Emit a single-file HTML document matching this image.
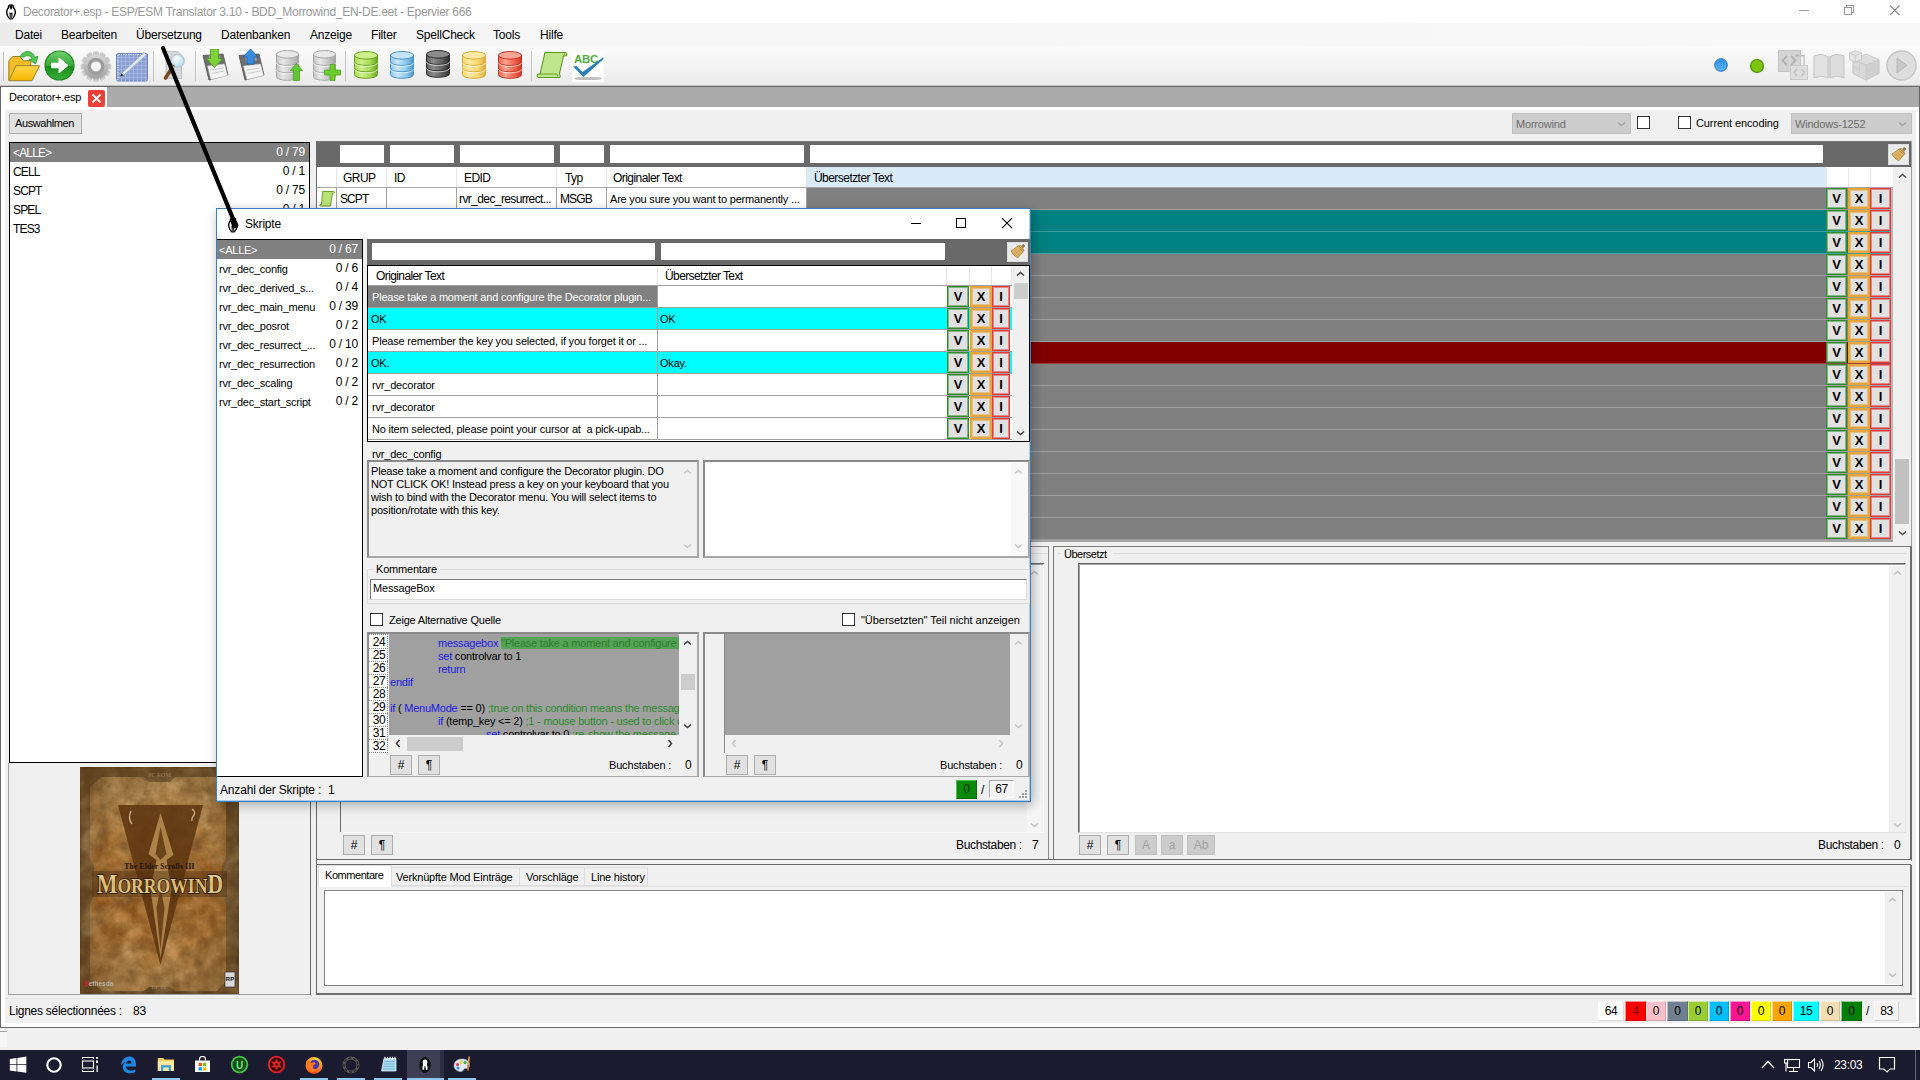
<!DOCTYPE html>
<html lang="de"><head><meta charset="utf-8"><title>Decorator+.esp - ESP/ESM Translator 3.10</title>
<style>
*{box-sizing:border-box;margin:0;padding:0}
html,body{width:1920px;height:1080px;overflow:hidden;background:#f0f0f0}
body{position:relative;font-family:"Liberation Sans",sans-serif;font-size:11px;color:#000}
div,span,svg{position:absolute}
.t{white-space:nowrap;line-height:14px;height:14px;font-size:11px}
.s{white-space:nowrap;line-height:16px;height:16px;font-size:12px}
.r{text-align:right}
.vb{width:21px;height:21px;background:#e1e1e1;border:1px solid;text-align:center;line-height:19px;font-size:13px}
.vb b{position:static;font-weight:700}
.c{position:static}

</style></head>
<body>
<!-- chrome -->
<div style="left:0px;top:0px;width:1920px;height:23px;background:#fff"></div>
<svg style="left:5.500px;top:3.700px" width="10" height="16" viewBox="0 0 10 15.500"><path d="M5 .7C3 .7 2.300 2 2.400 3.600 1.100 5 .5 6.800.7 8.800c.2 2 1.500 4 3 5.800h2.600c1.500-1.800 2.800-3.800 3-5.800.2-2-.4-3.800-1.700-5.200C7.700 2 7 .7 5 .7z" fill="#fff" stroke="#000" stroke-width="1.400"/><path d="M5 1.500c-1 0-1.600.8-1.500 1.800l.8.900-.5 1.300.7-.4L5 4.300l.5.800.7.400-.5-1.300.8-.9C6.600 2.300 6 1.500 5 1.500zM3.300 8.500l.7 5.500h.7V9.500h.600V14h.7l.7-5.500z" fill="#000"/></svg>
<div class="s" style="left:23px;top:4px;color:#999;letter-spacing:-0.28px">Decorator+.esp - ESP/ESM Translator 3.10 - BDD_Morrowind_EN-DE.eet - Epervier 666</div>
<svg style="left:1790px;top:0" width="130" height="22" viewBox="0 0 130 22"><g stroke="#999" stroke-width="1" fill="none" shape-rendering="crispEdges"><path d="M9 10.500h10"/><path d="M54.500 7.500h7v7h-7z"/><path d="M56.500 7.500v-2h7v7h-2"/></g><path d="M100 5.500l9.500 9.500M109.500 5.500l-9.500 9.500" stroke="#888" stroke-width="1.100" fill="none"/></svg>
<div style="left:0px;top:23px;width:1920px;height:23px;background:linear-gradient(90deg,#ececec 0,#f1f1f1 8%,#f5f5f5 22%,#f9f9f9 100%)"></div>
<div class="s" style="left:15px;top:27px;letter-spacing:-0.2px">Datei</div>
<div class="s" style="left:61px;top:27px;letter-spacing:-0.2px">Bearbeiten</div>
<div class="s" style="left:136px;top:27px;letter-spacing:-0.2px">Übersetzung</div>
<div class="s" style="left:221px;top:27px;letter-spacing:-0.2px">Datenbanken</div>
<div class="s" style="left:310px;top:27px;letter-spacing:-0.2px">Anzeige</div>
<div class="s" style="left:371px;top:27px;letter-spacing:-0.2px">Filter</div>
<div class="s" style="left:416px;top:27px;letter-spacing:-0.2px">SpellCheck</div>
<div class="s" style="left:493px;top:27px;letter-spacing:-0.2px">Tools</div>
<div class="s" style="left:540px;top:27px;letter-spacing:-0.2px">Hilfe</div>
<!-- toolbar -->
<div style="left:0px;top:46px;width:1920px;height:40px;background:linear-gradient(#fbfbfb,#f2f2f2 60%,#e9e9e9)"></div>
<div style="left:0px;top:85px;width:1920px;height:1px;background:#c4c4c4"></div>
<div style="left:0px;top:86px;width:1920px;height:1px;background:#6a6a6a"></div>
<div style="left:3px;top:52px;width:1px;height:29px;background:#bdbdbd"></div>
<div style="left:153px;top:51px;width:1px;height:30px;background:#c4c4c4"></div>
<div style="left:195px;top:51px;width:1px;height:30px;background:#c4c4c4"></div>
<div style="left:345px;top:51px;width:1px;height:30px;background:#c4c4c4"></div>
<div style="left:531px;top:51px;width:1px;height:30px;background:#c4c4c4"></div>
<svg style="left:8px;top:49px" width="34" height="34" viewBox="0 0 34 34"><defs><linearGradient id="fo" x1="0" y1="0" x2="0" y2="1"><stop offset="0" stop-color="#ffd84a"/><stop offset="1" stop-color="#f5b400"/></linearGradient></defs><path d="M.8 31.500V11.700L5 7.500h7l3.300 4.200h7.500v6" fill="#f3bd2a" stroke="#9a8228" stroke-width="1"/><path d="M.8 31.700L8 16.700h23.600L24 31.700z" fill="url(#fo)" stroke="#9a8228" stroke-width="1"/><path d="M12 8c2-5 8-7.500 12.500-3.500 1.500 1.400 2 2.500 2.300 3.800l3.200-1-2.200 7.500-6.800-4 3-1c-.6-2.600-4.500-4.500-8-1.800z" fill="#56c456" stroke="#2f9a2f" stroke-width=".8"/></svg>
<svg style="left:44px;top:50px" width="31" height="31" viewBox="0 0 31 31"><defs><linearGradient id="ga" x1="0" y1="0" x2="0" y2="1"><stop offset="0" stop-color="#6fcf6f"/><stop offset=".5" stop-color="#3aa83a"/><stop offset=".52" stop-color="#118a11"/><stop offset="1" stop-color="#3fb03f"/></linearGradient></defs><circle cx="15.500" cy="15.500" r="14.500" fill="url(#ga)" stroke="#1d8a1d" stroke-width="1.200"/><path d="M7.500 13.200h7.500V8l9 7.500-9 7.500v-5.200H7.500z" fill="#fff" stroke="#fff" stroke-width="1" stroke-linejoin="round"/></svg>
<svg style="left:80px;top:50px" width="32" height="32" viewBox="0 0 32 32"><defs><linearGradient id="gr" x1="0" y1="0" x2="0" y2="1"><stop offset="0" stop-color="#d8d8d8"/><stop offset="1" stop-color="#a2a2a2"/></linearGradient></defs><g transform="translate(16 16.500)"><g fill="url(#gr)"><rect x="-3" y="-15.500" width="6" height="7" rx="1.600" transform="rotate(0)"/><rect x="-3" y="-15.500" width="6" height="7" rx="1.600" transform="rotate(30)"/><rect x="-3" y="-15.500" width="6" height="7" rx="1.600" transform="rotate(60)"/><rect x="-3" y="-15.500" width="6" height="7" rx="1.600" transform="rotate(90)"/><rect x="-3" y="-15.500" width="6" height="7" rx="1.600" transform="rotate(120)"/><rect x="-3" y="-15.500" width="6" height="7" rx="1.600" transform="rotate(150)"/><rect x="-3" y="-15.500" width="6" height="7" rx="1.600" transform="rotate(180)"/><rect x="-3" y="-15.500" width="6" height="7" rx="1.600" transform="rotate(210)"/><rect x="-3" y="-15.500" width="6" height="7" rx="1.600" transform="rotate(240)"/><rect x="-3" y="-15.500" width="6" height="7" rx="1.600" transform="rotate(270)"/><rect x="-3" y="-15.500" width="6" height="7" rx="1.600" transform="rotate(300)"/><rect x="-3" y="-15.500" width="6" height="7" rx="1.600" transform="rotate(330)"/></g><circle r="12.200" fill="url(#gr)"/><circle r="7" fill="none" stroke="#9c9c9c" stroke-width="3"/><circle r="4.800" fill="#f6f6f6"/></g></svg>
<svg style="left:116px;top:52px" width="33" height="30" viewBox="0 0 33 30"><rect x=".5" y="1.500" width="31" height="27.500" rx="1.500" fill="#8a9fd2" stroke="#6f86bf"/><path d="M5.500 2v27M9.500 2v27M13.500 2v27M17.500 2v27M21.500 2v27M25.500 2v27M29.500 2v27M1 5.500h30M1 9.500h30M1 13.500h30M1 17.500h30M1 21.500h30M1 25.500h30" stroke="#a9b9e2" stroke-width=".8"/><path d="M2 3v26M2.500 2.500h28" stroke="#e6ecfa" stroke-width="1" stroke-dasharray="1.200 1.200"/><path d="M4 24.500l2-3.500L28 .5l2.500 2.500L8 23z" fill="#dfe6ee" stroke="#9aa6b8" stroke-width=".7"/><path d="M4 24.500l1.600-3 2.200 2z" fill="#223"/></svg>
<svg style="left:160px;top:49px" width="32" height="34" viewBox="0 0 32 34"><defs><radialGradient id="ln" cx=".4" cy=".35" r=".7"><stop offset="0" stop-color="#fff"/><stop offset="1" stop-color="#a9dcf0"/></radialGradient></defs><path d="M6 2.500h12l3.500 3.500v23.500H6z" fill="#d4d8dc" stroke="#b4b8bc" stroke-width=".8"/><circle cx="17.600" cy="11.700" r="6.500" fill="url(#ln)" stroke="#c0c8d0" stroke-width="1.600"/><path d="M13 17.500L5.500 29" stroke="#7a4a1c" stroke-width="3.600" stroke-linecap="round"/><path d="M13.500 17l-2.500 3.800" stroke="#c8c8c8" stroke-width="3.600"/></svg>
<svg style="left:202px;top:49px" width="28" height="32" viewBox="0 0 28 32"><path d="M1 6.500l20-1.500 5 21-19 5z" fill="#6f6f6f" stroke="#505050" stroke-width=".8"/><path d="M6.500 6.300l11-.8 1.400 6-11 1z" fill="#9a9a9a"/><path d="M5.500 17l17-2 3 11.500-16.500 4z" fill="#f4f4f4" stroke="#c8c8c8" stroke-width=".5"/><path d="M8.500 21l13-2M9.500 24.500l13-2.500" stroke="#c0c0c0" stroke-width=".8"/><path d="M8.500 0h8v9.500h4l-8 9-8-9h4z" fill="#7ed03c" stroke="#4c9a1e" stroke-width=".8"/></svg>
<svg style="left:238px;top:49px" width="28" height="32" viewBox="0 0 28 32"><path d="M1 6.500l20-1.500 5 21-19 5z" fill="#6f6f6f" stroke="#505050" stroke-width=".8"/><path d="M6.500 6.300l11-.8 1.400 6-11 1z" fill="#9a9a9a"/><path d="M5.500 17l17-2 3 11.500-16.500 4z" fill="#f4f4f4" stroke="#c8c8c8" stroke-width=".5"/><path d="M8.500 21l13-2M9.500 24.500l13-2.500" stroke="#c0c0c0" stroke-width=".8"/><path d="M12.500 0l7.500 8h-4v7h-7V8h-4z" fill="#3a8be0" stroke="#1f62b0" stroke-width=".8"/></svg>
<svg style="left:276px;top:50px" width="23" height="31" viewBox="0 0 23 31"><defs><linearGradient id="g276" x1="0" x2="1"><stop offset="0" stop-color="#c4c4c4"/><stop offset=".3" stop-color="#e9e9e9"/><stop offset=".7" stop-color="#c4c4c4"/><stop offset="1" stop-color="#a6a6a6"/></linearGradient></defs><path d="M.5 4.3v22.4c0 4.8 22 4.8 22 0V4.3z" fill="url(#g276)" stroke="#a6a6a6" stroke-width="1"/><path d="M.5 11.8c0 4.8 22 4.8 22 0M.5 19.2c0 4.8 22 4.8 22 0" fill="none" stroke="#a6a6a6" stroke-width="1"/><path d="M.5 12.8c0 4.8 22 4.8 22 0M.5 20.2c0 4.8 22 4.8 22 0" fill="none" stroke="#fff" stroke-opacity=".65" stroke-width="1"/><ellipse cx="11.5" cy="4.3" rx="11.0" ry="3.8" fill="#e9e9e9" stroke="#a6a6a6" stroke-width="1"/></svg>
<svg style="left:290px;top:63px" width="13" height="18" viewBox="0 0 13 18"><path d="M6.500 .5l6 7H9.500v10h-6v-10H.5z" fill="#62c832" stroke="#3f9a18" stroke-width=".7"/></svg>
<svg style="left:313px;top:50px" width="23" height="31" viewBox="0 0 23 31"><defs><linearGradient id="g313" x1="0" x2="1"><stop offset="0" stop-color="#c4c4c4"/><stop offset=".3" stop-color="#e9e9e9"/><stop offset=".7" stop-color="#c4c4c4"/><stop offset="1" stop-color="#a6a6a6"/></linearGradient></defs><path d="M.5 4.3v22.4c0 4.8 22 4.8 22 0V4.3z" fill="url(#g313)" stroke="#a6a6a6" stroke-width="1"/><path d="M.5 11.8c0 4.8 22 4.8 22 0M.5 19.2c0 4.8 22 4.8 22 0" fill="none" stroke="#a6a6a6" stroke-width="1"/><path d="M.5 12.8c0 4.8 22 4.8 22 0M.5 20.2c0 4.8 22 4.8 22 0" fill="none" stroke="#fff" stroke-opacity=".65" stroke-width="1"/><ellipse cx="11.5" cy="4.3" rx="11.0" ry="3.8" fill="#e9e9e9" stroke="#a6a6a6" stroke-width="1"/></svg>
<svg style="left:324px;top:64px" width="17" height="17" viewBox="0 0 17 17"><path d="M6 .5h5v5.500h5.500v5H11v5.500H6V11H.5V6H6z" fill="#6ccc2c" stroke="#49a016" stroke-width=".7"/></svg>
<svg style="left:354px;top:51px" width="24" height="28" viewBox="0 0 24 28"><defs><linearGradient id="g354" x1="0" x2="1"><stop offset="0" stop-color="#a4d850"/><stop offset=".3" stop-color="#cdf08a"/><stop offset=".7" stop-color="#a4d850"/><stop offset="1" stop-color="#6aa622"/></linearGradient></defs><path d="M.5 4.3v19.4c0 4.8 23 4.8 23 0V4.3z" fill="url(#g354)" stroke="#6aa622" stroke-width="1"/><path d="M.5 10.8c0 4.8 23 4.8 23 0M.5 17.2c0 4.8 23 4.8 23 0" fill="none" stroke="#6aa622" stroke-width="1"/><path d="M.5 11.8c0 4.8 23 4.8 23 0M.5 18.2c0 4.8 23 4.8 23 0" fill="none" stroke="#fff" stroke-opacity=".65" stroke-width="1"/><ellipse cx="12.0" cy="4.3" rx="11.5" ry="3.8" fill="#cdf08a" stroke="#6aa622" stroke-width="1"/></svg>
<svg style="left:390px;top:51px" width="24" height="28" viewBox="0 0 24 28"><defs><linearGradient id="g390" x1="0" x2="1"><stop offset="0" stop-color="#8cc8ec"/><stop offset=".3" stop-color="#c6e6f8"/><stop offset=".7" stop-color="#8cc8ec"/><stop offset="1" stop-color="#4a94c8"/></linearGradient></defs><path d="M.5 4.3v19.4c0 4.8 23 4.8 23 0V4.3z" fill="url(#g390)" stroke="#4a94c8" stroke-width="1"/><path d="M.5 10.8c0 4.8 23 4.8 23 0M.5 17.2c0 4.8 23 4.8 23 0" fill="none" stroke="#4a94c8" stroke-width="1"/><path d="M.5 11.8c0 4.8 23 4.8 23 0M.5 18.2c0 4.8 23 4.8 23 0" fill="none" stroke="#fff" stroke-opacity=".65" stroke-width="1"/><ellipse cx="12.0" cy="4.3" rx="11.5" ry="3.8" fill="#c6e6f8" stroke="#4a94c8" stroke-width="1"/></svg>
<svg style="left:426px;top:50px" width="24" height="28" viewBox="0 0 24 28"><defs><linearGradient id="g426" x1="0" x2="1"><stop offset="0" stop-color="#5c5c5c"/><stop offset=".3" stop-color="#8c8c8c"/><stop offset=".7" stop-color="#5c5c5c"/><stop offset="1" stop-color="#2e2e2e"/></linearGradient></defs><path d="M.5 4.3v19.4c0 4.8 23 4.8 23 0V4.3z" fill="url(#g426)" stroke="#2e2e2e" stroke-width="1"/><path d="M.5 10.8c0 4.8 23 4.8 23 0M.5 17.2c0 4.8 23 4.8 23 0" fill="none" stroke="#2e2e2e" stroke-width="1"/><path d="M.5 11.8c0 4.8 23 4.8 23 0M.5 18.2c0 4.8 23 4.8 23 0" fill="none" stroke="#fff" stroke-opacity=".65" stroke-width="1"/><ellipse cx="12.0" cy="4.3" rx="11.5" ry="3.8" fill="#8c8c8c" stroke="#2e2e2e" stroke-width="1"/></svg>
<svg style="left:462px;top:51px" width="24" height="28" viewBox="0 0 24 28"><defs><linearGradient id="g462" x1="0" x2="1"><stop offset="0" stop-color="#f8d468"/><stop offset=".3" stop-color="#fdeaa6"/><stop offset=".7" stop-color="#f8d468"/><stop offset="1" stop-color="#dcae3a"/></linearGradient></defs><path d="M.5 4.3v19.4c0 4.8 23 4.8 23 0V4.3z" fill="url(#g462)" stroke="#dcae3a" stroke-width="1"/><path d="M.5 10.8c0 4.8 23 4.8 23 0M.5 17.2c0 4.8 23 4.8 23 0" fill="none" stroke="#dcae3a" stroke-width="1"/><path d="M.5 11.8c0 4.8 23 4.8 23 0M.5 18.2c0 4.8 23 4.8 23 0" fill="none" stroke="#fff" stroke-opacity=".65" stroke-width="1"/><ellipse cx="12.0" cy="4.3" rx="11.5" ry="3.8" fill="#fdeaa6" stroke="#dcae3a" stroke-width="1"/></svg>
<svg style="left:498px;top:51px" width="24" height="28" viewBox="0 0 24 28"><defs><linearGradient id="g498" x1="0" x2="1"><stop offset="0" stop-color="#f0604a"/><stop offset=".3" stop-color="#fba694"/><stop offset=".7" stop-color="#f0604a"/><stop offset="1" stop-color="#c8382a"/></linearGradient></defs><path d="M.5 4.3v19.4c0 4.8 23 4.8 23 0V4.3z" fill="url(#g498)" stroke="#c8382a" stroke-width="1"/><path d="M.5 10.8c0 4.8 23 4.8 23 0M.5 17.2c0 4.8 23 4.8 23 0" fill="none" stroke="#c8382a" stroke-width="1"/><path d="M.5 11.8c0 4.8 23 4.8 23 0M.5 18.2c0 4.8 23 4.8 23 0" fill="none" stroke="#fff" stroke-opacity=".65" stroke-width="1"/><ellipse cx="12.0" cy="4.3" rx="11.5" ry="3.8" fill="#fba694" stroke="#c8382a" stroke-width="1"/></svg>
<svg style="left:536px;top:51px" width="32" height="28" viewBox="0 0 32 28"><path d="M9 1.500h20c2.500 0 2.500 3.500 0 3.500h-1.500l-4 17.500c0 2.500 2 2.500 0 4H3c-2.500 0-2.500-3.500 0-3.500h1z" fill="#bfe68a" stroke="#5e9a22" stroke-width="1.100"/><path d="M3 23h17.500c1.500 0 1.500 3 0 3.500" fill="none" stroke="#5e9a22" stroke-width=".9"/><path d="M27.500 5c1.500-.5 1.500-2.500 0-3" fill="none" stroke="#5e9a22" stroke-width=".9"/></svg>
<div style="left:572px;top:51px;width:32px;height:31px;background:#fff"></div>
<svg style="left:572px;top:51px" width="32" height="31" viewBox="0 0 32 31"><ellipse cx="16" cy="27.500" rx="14" ry="1.600" fill="#bdbdbd"/><text x="2" y="11.500" font-family="Liberation Sans,sans-serif" font-weight="700" font-size="11.500" letter-spacing="-.3" fill="#55ad3b">ABC</text><path d="M1 15.500l3.500-.5 6 6L31 6.500l.5 1.500L11.500 26z" fill="#2a7fb8"/></svg>
<svg style="left:1712px;top:56px" width="18" height="18" viewBox="0 0 18 18"><defs><linearGradient id="bd" x1="0" y1="0" x2="0" y2="1"><stop offset="0" stop-color="#2f8fe0"/><stop offset="1" stop-color="#5ab4f4"/></linearGradient></defs><circle cx="9" cy="9" r="6.300" fill="url(#bd)" stroke="#2a78c0" stroke-width="1"/></svg>
<svg style="left:1748px;top:57px" width="18" height="18" viewBox="0 0 18 18"><circle cx="9" cy="9" r="6.500" fill="#7cc410" stroke="#4f8f08" stroke-width="1.200"/></svg>
<svg style="left:1776px;top:49px" width="34" height="34" viewBox="0 0 34 34"><rect x="2.500" y="1.500" width="22" height="21" fill="#d4d4d4" stroke="#c4c4c4"/><path d="M21 6.500h7v10" fill="none" stroke="#c0c0c0" stroke-width="1.400"/><circle cx="21" cy="6.500" r="1.600" fill="#b8b8b8"/><circle cx="28" cy="17.500" r="1.600" fill="#b8b8b8"/><rect x="14.500" y="16.500" width="17" height="14" fill="#dedede" stroke="#cacaca"/><path d="M11 7l-4.500 4.500L11 16M15 7l4.500 4.500L15 16" fill="none" stroke="#b0b0b0" stroke-width="1.800"/><path d="M21 20l-3 3.500 3 3.500M25.500 20l3 3.500-3 3.500" fill="none" stroke="#c0c0c0" stroke-width="1.300"/></svg>
<svg style="left:1812px;top:49px" width="34" height="34" viewBox="0 0 34 34"><path d="M2 7c5-2 10-2 14 1v21c-4-2-9-2-14 0z" fill="#e2e2e2" stroke="#c4c4c4"/><path d="M32 7c-5-2-10-2-14 1v21c4-2 9-2 14 0z" fill="#dcdcdc" stroke="#c4c4c4"/><path d="M16 8l1-2 1 2v21h-2z" fill="#cfcfcf"/></svg>
<svg style="left:1848px;top:49px" width="34" height="34" viewBox="0 0 34 34"><g stroke="#c6c6c6" stroke-width=".8"><path d="M18 5l13 5.500v14L18 31 5 24.500v-14z" fill="#dcdcdc"/><path d="M18 16l13-5.500v14L18 31z" fill="#d0d0d0"/><path d="M5 10.500L18 16v15L5 24.500z" fill="#d8d8d8"/><path d="M7.500 1.500l6 2.500v6.500l-6 2.500-6-2.500V4z" fill="#e4e4e4"/><path d="M1.500 4l6 2.500 6-2.500M7.500 6.500V13" fill="none"/><path d="M11.500 13v9M5 17.500l6.500 3M24.500 13.500v14M18 23.500l13-6" fill="none" stroke="#cccccc"/></g></svg>
<svg style="left:1885px;top:49px" width="34" height="34" viewBox="0 0 34 34"><circle cx="16.500" cy="16.500" r="14.500" fill="#dedede" stroke="#c6c6c6" stroke-width="1.500"/><path d="M12 9l10 7.500-10 7.500z" fill="#c9c9c9" stroke="#b9b9b9"/></svg>
<!-- tabstrip -->
<div style="left:0px;top:87px;width:1920px;height:20px;background:#ababab"></div>
<div style="left:1px;top:87px;width:106px;height:21px;background:#fff"></div>
<div class="t" style="left:9px;top:90px;letter-spacing:-0.25px">Decorator+.esp</div>
<div style="left:88px;top:90px;width:17px;height:17px;background:#ee3f38;border-radius:2px"></div>
<svg style="left:88px;top:90px" width="17" height="17" viewBox="0 0 17 17"><path d="M4.500 4.500l8 8M12.500 4.500l-8 8" stroke="#fff" stroke-width="1.800"/></svg>
<!-- topright -->
<div style="left:1512px;top:113px;width:119px;height:21px;background:#cccccc;border:1px solid #bfbfbf"></div>
<div class="t" style="left:1516px;top:117px;color:#6d6d6d;letter-spacing:-0.2px;">Morrowind</div>
<svg style="left:1617px;top:121px" width="9" height="6" viewBox="0 0 9 6"><path d="M1 1.500L4.5 4.5L8 1.500" fill="none" stroke="#a4a4a4" stroke-width="1.600"/></svg>
<div style="left:1637px;top:116px;width:13px;height:13px;background:#fff;border:1px solid #333"></div>
<div style="left:1678px;top:116px;width:13px;height:13px;background:#fff;border:1px solid #333"></div>
<div class="t" style="left:1696px;top:116px;letter-spacing:-0.1px">Current encoding</div>
<div style="left:1791px;top:113px;width:121px;height:21px;background:#cccccc;border:1px solid #bfbfbf"></div>
<div class="t" style="left:1795px;top:117px;color:#6d6d6d;letter-spacing:-0.2px;">Windows-1252</div>
<svg style="left:1898px;top:121px" width="9" height="6" viewBox="0 0 9 6"><path d="M1 1.500L4.5 4.5L8 1.500" fill="none" stroke="#a4a4a4" stroke-width="1.600"/></svg>
<!-- leftpanel -->
<div style="left:9px;top:113px;width:73px;height:21px;background:#e1e1e1;border:1px solid #adadad"></div>
<div class="t" style="left:15px;top:116px;letter-spacing:-0.4px">Auswahlmen</div>
<div style="left:9px;top:142px;width:301px;height:621px;background:#fff;border:1px solid #000"></div>
<div style="left:10px;top:143px;width:299px;height:19px;background:#808080"></div>
<div class="t" style="left:13px;top:146px;color:#fff;font-size:12px;letter-spacing:-0.85px">&lt;ALLE&gt;</div>
<div class="t" style="left:230px;top:145px;color:#fff;font-size:12px;width:75px;text-align:right;letter-spacing:-0.2px;">0 / 79</div>
<div class="t" style="left:13px;top:165px;color:#000;font-size:12px;letter-spacing:-0.85px">CELL</div>
<div class="t" style="left:230px;top:164px;color:#000;font-size:12px;width:75px;text-align:right;letter-spacing:-0.2px;">0 / 1</div>
<div class="t" style="left:13px;top:184px;color:#000;font-size:12px;letter-spacing:-0.85px">SCPT</div>
<div class="t" style="left:230px;top:183px;color:#000;font-size:12px;width:75px;text-align:right;letter-spacing:-0.2px;">0 / 75</div>
<div class="t" style="left:13px;top:203px;color:#000;font-size:12px;letter-spacing:-0.85px">SPEL</div>
<div class="t" style="left:230px;top:202px;color:#000;font-size:12px;width:75px;text-align:right;letter-spacing:-0.2px;">0 / 1</div>
<div class="t" style="left:13px;top:222px;color:#000;font-size:12px;letter-spacing:-0.85px">TES3</div>
<div class="t" style="left:230px;top:221px;color:#000;font-size:12px;width:75px;text-align:right;letter-spacing:-0.2px;">0 / 1</div>
<div style="left:8px;top:763px;width:303px;height:232px;border:1px solid #a0a0a0;border-top:none"></div>
<!-- maingrid -->
<div style="left:316px;top:141px;width:1595px;height:1px;background:#7a7a7a"></div>
<div style="left:316px;top:142px;width:1595px;height:25px;background:#696969"></div>
<div style="left:340px;top:145px;width:44px;height:18px;background:#fff"></div>
<div style="left:390px;top:145px;width:64px;height:18px;background:#fff"></div>
<div style="left:460px;top:145px;width:94px;height:18px;background:#fff"></div>
<div style="left:560px;top:145px;width:44px;height:18px;background:#fff"></div>
<div style="left:610px;top:145px;width:194px;height:18px;background:#fff"></div>
<div style="left:810px;top:145px;width:1013px;height:18px;background:#fff"></div>
<div style="left:1888px;top:144px;width:21px;height:21px;background:#ebebeb;border:1px solid #dcdcdc"></div>
<svg style="left:1890px;top:146px" width="17" height="17" viewBox="0 0 17 17"><path d="M2 8L9.300 2.800c1.400-.6 2.700-.2 3.600.8L15 7.500 9 14.700C6 13.700 3.500 11.500 2 8z" fill="#dcb266" stroke="#9a7632" stroke-width=".6"/><path d="M4 9.500l4.500 4M6 8l4.500 4.500M8 6.500l4 4.500" stroke="#c4963e" stroke-width=".7"/><path d="M8.800 3.600l5.400 5.600M10 3l5 5" stroke="#7a5c2a" stroke-width=".7" stroke-dasharray="1 .7"/><path d="M12.600 3l1.600-1.700L16 3l-1.700 1.800z" fill="#9a7a3a" stroke="#6a4e1e" stroke-width=".4"/></svg>
<div style="left:316px;top:167px;width:1577px;height:21px;background:#fff"></div>
<div style="left:806px;top:167px;width:1020px;height:20px;background:#d9ebf9"></div>
<div style="left:336px;top:168px;width:1px;height:19px;background:#e5e5e5"></div>
<div style="left:386px;top:168px;width:1px;height:19px;background:#e5e5e5"></div>
<div style="left:456px;top:168px;width:1px;height:19px;background:#e5e5e5"></div>
<div style="left:556px;top:168px;width:1px;height:19px;background:#e5e5e5"></div>
<div style="left:606px;top:168px;width:1px;height:19px;background:#e5e5e5"></div>
<div style="left:806px;top:168px;width:1px;height:19px;background:#e5e5e5"></div>
<div style="left:1826px;top:168px;width:1px;height:19px;background:#e5e5e5"></div>
<div style="left:1848px;top:168px;width:1px;height:19px;background:#e5e5e5"></div>
<div style="left:1870px;top:168px;width:1px;height:19px;background:#e5e5e5"></div>
<div style="left:316px;top:187px;width:1577px;height:1px;background:#a8a8a8"></div>
<div class="t" style="left:343px;top:171px;font-size:12px;letter-spacing:-0.55px">GRUP</div>
<div class="t" style="left:394px;top:171px;font-size:12px;letter-spacing:-0.55px">ID</div>
<div class="t" style="left:464px;top:171px;font-size:12px;letter-spacing:-0.55px">EDID</div>
<div class="t" style="left:565px;top:171px;font-size:12px;letter-spacing:-0.55px">Typ</div>
<div class="t" style="left:613px;top:171px;font-size:12px;letter-spacing:-0.55px">Originaler Text</div>
<div class="t" style="left:814px;top:171px;font-size:12px;letter-spacing:-0.55px">Übersetzter Text</div>
<div style="left:316px;top:188px;width:1577px;height:22px;background:#808080;border-bottom:1px solid #a0a0a0"></div>
<div class="vb" style="left:1826px;top:188px;width:21px;border-width:1px;line-height:19px;border-color:#2f8f2f;box-shadow:inset 0 0 0 1px #2f8f2f88"><b>V</b></div><div class="vb" style="left:1848px;top:188px;width:22px;border-width:2px;line-height:17px;border-color:#e8a53a;box-shadow:inset 0 0 0 1px #e8a53a88"><b>X</b></div><div class="vb" style="left:1870px;top:188px;width:21px;border-width:1px;line-height:19px;border-color:#e23b3b;box-shadow:inset 0 0 0 1px #e23b3b88"><b>I</b></div>
<div style="left:316px;top:210px;width:1577px;height:22px;background:#008080;border-bottom:1px solid #40a0a0"></div>
<div class="vb" style="left:1826px;top:210px;width:21px;border-width:1px;line-height:19px;border-color:#2f8f2f;box-shadow:inset 0 0 0 1px #2f8f2f88"><b>V</b></div><div class="vb" style="left:1848px;top:210px;width:22px;border-width:2px;line-height:17px;border-color:#e8a53a;box-shadow:inset 0 0 0 1px #e8a53a88"><b>X</b></div><div class="vb" style="left:1870px;top:210px;width:21px;border-width:1px;line-height:19px;border-color:#e23b3b;box-shadow:inset 0 0 0 1px #e23b3b88"><b>I</b></div>
<div style="left:316px;top:232px;width:1577px;height:22px;background:#008080;border-bottom:1px solid #40a0a0"></div>
<div class="vb" style="left:1826px;top:232px;width:21px;border-width:1px;line-height:19px;border-color:#2f8f2f;box-shadow:inset 0 0 0 1px #2f8f2f88"><b>V</b></div><div class="vb" style="left:1848px;top:232px;width:22px;border-width:2px;line-height:17px;border-color:#e8a53a;box-shadow:inset 0 0 0 1px #e8a53a88"><b>X</b></div><div class="vb" style="left:1870px;top:232px;width:21px;border-width:1px;line-height:19px;border-color:#e23b3b;box-shadow:inset 0 0 0 1px #e23b3b88"><b>I</b></div>
<div style="left:316px;top:254px;width:1577px;height:22px;background:#808080;border-bottom:1px solid #a0a0a0"></div>
<div class="vb" style="left:1826px;top:254px;width:21px;border-width:1px;line-height:19px;border-color:#2f8f2f;box-shadow:inset 0 0 0 1px #2f8f2f88"><b>V</b></div><div class="vb" style="left:1848px;top:254px;width:22px;border-width:2px;line-height:17px;border-color:#e8a53a;box-shadow:inset 0 0 0 1px #e8a53a88"><b>X</b></div><div class="vb" style="left:1870px;top:254px;width:21px;border-width:1px;line-height:19px;border-color:#e23b3b;box-shadow:inset 0 0 0 1px #e23b3b88"><b>I</b></div>
<div style="left:316px;top:276px;width:1577px;height:22px;background:#808080;border-bottom:1px solid #a0a0a0"></div>
<div class="vb" style="left:1826px;top:276px;width:21px;border-width:1px;line-height:19px;border-color:#2f8f2f;box-shadow:inset 0 0 0 1px #2f8f2f88"><b>V</b></div><div class="vb" style="left:1848px;top:276px;width:22px;border-width:2px;line-height:17px;border-color:#e8a53a;box-shadow:inset 0 0 0 1px #e8a53a88"><b>X</b></div><div class="vb" style="left:1870px;top:276px;width:21px;border-width:1px;line-height:19px;border-color:#e23b3b;box-shadow:inset 0 0 0 1px #e23b3b88"><b>I</b></div>
<div style="left:316px;top:298px;width:1577px;height:22px;background:#808080;border-bottom:1px solid #a0a0a0"></div>
<div class="vb" style="left:1826px;top:298px;width:21px;border-width:1px;line-height:19px;border-color:#2f8f2f;box-shadow:inset 0 0 0 1px #2f8f2f88"><b>V</b></div><div class="vb" style="left:1848px;top:298px;width:22px;border-width:2px;line-height:17px;border-color:#e8a53a;box-shadow:inset 0 0 0 1px #e8a53a88"><b>X</b></div><div class="vb" style="left:1870px;top:298px;width:21px;border-width:1px;line-height:19px;border-color:#e23b3b;box-shadow:inset 0 0 0 1px #e23b3b88"><b>I</b></div>
<div style="left:316px;top:320px;width:1577px;height:22px;background:#808080;border-bottom:1px solid #a0a0a0"></div>
<div class="vb" style="left:1826px;top:320px;width:21px;border-width:1px;line-height:19px;border-color:#2f8f2f;box-shadow:inset 0 0 0 1px #2f8f2f88"><b>V</b></div><div class="vb" style="left:1848px;top:320px;width:22px;border-width:2px;line-height:17px;border-color:#e8a53a;box-shadow:inset 0 0 0 1px #e8a53a88"><b>X</b></div><div class="vb" style="left:1870px;top:320px;width:21px;border-width:1px;line-height:19px;border-color:#e23b3b;box-shadow:inset 0 0 0 1px #e23b3b88"><b>I</b></div>
<div style="left:316px;top:342px;width:1577px;height:22px;background:#800000;border-bottom:1px solid #a04040"></div>
<div class="vb" style="left:1826px;top:342px;width:21px;border-width:1px;line-height:19px;border-color:#2f8f2f;box-shadow:inset 0 0 0 1px #2f8f2f88"><b>V</b></div><div class="vb" style="left:1848px;top:342px;width:22px;border-width:2px;line-height:17px;border-color:#e8a53a;box-shadow:inset 0 0 0 1px #e8a53a88"><b>X</b></div><div class="vb" style="left:1870px;top:342px;width:21px;border-width:1px;line-height:19px;border-color:#e23b3b;box-shadow:inset 0 0 0 1px #e23b3b88"><b>I</b></div>
<div style="left:316px;top:364px;width:1577px;height:22px;background:#808080;border-bottom:1px solid #a0a0a0"></div>
<div class="vb" style="left:1826px;top:364px;width:21px;border-width:1px;line-height:19px;border-color:#2f8f2f;box-shadow:inset 0 0 0 1px #2f8f2f88"><b>V</b></div><div class="vb" style="left:1848px;top:364px;width:22px;border-width:2px;line-height:17px;border-color:#e8a53a;box-shadow:inset 0 0 0 1px #e8a53a88"><b>X</b></div><div class="vb" style="left:1870px;top:364px;width:21px;border-width:1px;line-height:19px;border-color:#e23b3b;box-shadow:inset 0 0 0 1px #e23b3b88"><b>I</b></div>
<div style="left:316px;top:386px;width:1577px;height:22px;background:#808080;border-bottom:1px solid #a0a0a0"></div>
<div class="vb" style="left:1826px;top:386px;width:21px;border-width:1px;line-height:19px;border-color:#2f8f2f;box-shadow:inset 0 0 0 1px #2f8f2f88"><b>V</b></div><div class="vb" style="left:1848px;top:386px;width:22px;border-width:2px;line-height:17px;border-color:#e8a53a;box-shadow:inset 0 0 0 1px #e8a53a88"><b>X</b></div><div class="vb" style="left:1870px;top:386px;width:21px;border-width:1px;line-height:19px;border-color:#e23b3b;box-shadow:inset 0 0 0 1px #e23b3b88"><b>I</b></div>
<div style="left:316px;top:408px;width:1577px;height:22px;background:#808080;border-bottom:1px solid #a0a0a0"></div>
<div class="vb" style="left:1826px;top:408px;width:21px;border-width:1px;line-height:19px;border-color:#2f8f2f;box-shadow:inset 0 0 0 1px #2f8f2f88"><b>V</b></div><div class="vb" style="left:1848px;top:408px;width:22px;border-width:2px;line-height:17px;border-color:#e8a53a;box-shadow:inset 0 0 0 1px #e8a53a88"><b>X</b></div><div class="vb" style="left:1870px;top:408px;width:21px;border-width:1px;line-height:19px;border-color:#e23b3b;box-shadow:inset 0 0 0 1px #e23b3b88"><b>I</b></div>
<div style="left:316px;top:430px;width:1577px;height:22px;background:#808080;border-bottom:1px solid #a0a0a0"></div>
<div class="vb" style="left:1826px;top:430px;width:21px;border-width:1px;line-height:19px;border-color:#2f8f2f;box-shadow:inset 0 0 0 1px #2f8f2f88"><b>V</b></div><div class="vb" style="left:1848px;top:430px;width:22px;border-width:2px;line-height:17px;border-color:#e8a53a;box-shadow:inset 0 0 0 1px #e8a53a88"><b>X</b></div><div class="vb" style="left:1870px;top:430px;width:21px;border-width:1px;line-height:19px;border-color:#e23b3b;box-shadow:inset 0 0 0 1px #e23b3b88"><b>I</b></div>
<div style="left:316px;top:452px;width:1577px;height:22px;background:#808080;border-bottom:1px solid #a0a0a0"></div>
<div class="vb" style="left:1826px;top:452px;width:21px;border-width:1px;line-height:19px;border-color:#2f8f2f;box-shadow:inset 0 0 0 1px #2f8f2f88"><b>V</b></div><div class="vb" style="left:1848px;top:452px;width:22px;border-width:2px;line-height:17px;border-color:#e8a53a;box-shadow:inset 0 0 0 1px #e8a53a88"><b>X</b></div><div class="vb" style="left:1870px;top:452px;width:21px;border-width:1px;line-height:19px;border-color:#e23b3b;box-shadow:inset 0 0 0 1px #e23b3b88"><b>I</b></div>
<div style="left:316px;top:474px;width:1577px;height:22px;background:#808080;border-bottom:1px solid #a0a0a0"></div>
<div class="vb" style="left:1826px;top:474px;width:21px;border-width:1px;line-height:19px;border-color:#2f8f2f;box-shadow:inset 0 0 0 1px #2f8f2f88"><b>V</b></div><div class="vb" style="left:1848px;top:474px;width:22px;border-width:2px;line-height:17px;border-color:#e8a53a;box-shadow:inset 0 0 0 1px #e8a53a88"><b>X</b></div><div class="vb" style="left:1870px;top:474px;width:21px;border-width:1px;line-height:19px;border-color:#e23b3b;box-shadow:inset 0 0 0 1px #e23b3b88"><b>I</b></div>
<div style="left:316px;top:496px;width:1577px;height:22px;background:#808080;border-bottom:1px solid #a0a0a0"></div>
<div class="vb" style="left:1826px;top:496px;width:21px;border-width:1px;line-height:19px;border-color:#2f8f2f;box-shadow:inset 0 0 0 1px #2f8f2f88"><b>V</b></div><div class="vb" style="left:1848px;top:496px;width:22px;border-width:2px;line-height:17px;border-color:#e8a53a;box-shadow:inset 0 0 0 1px #e8a53a88"><b>X</b></div><div class="vb" style="left:1870px;top:496px;width:21px;border-width:1px;line-height:19px;border-color:#e23b3b;box-shadow:inset 0 0 0 1px #e23b3b88"><b>I</b></div>
<div style="left:316px;top:518px;width:1577px;height:22px;background:#808080;border-bottom:1px solid #a0a0a0"></div>
<div class="vb" style="left:1826px;top:518px;width:21px;border-width:1px;line-height:19px;border-color:#2f8f2f;box-shadow:inset 0 0 0 1px #2f8f2f88"><b>V</b></div><div class="vb" style="left:1848px;top:518px;width:22px;border-width:2px;line-height:17px;border-color:#e8a53a;box-shadow:inset 0 0 0 1px #e8a53a88"><b>X</b></div><div class="vb" style="left:1870px;top:518px;width:21px;border-width:1px;line-height:19px;border-color:#e23b3b;box-shadow:inset 0 0 0 1px #e23b3b88"><b>I</b></div>
<div style="left:316px;top:188px;width:490px;height:21px;background:#fff"></div>
<div style="left:336px;top:188px;width:1px;height:21px;background:#a0a0a0"></div>
<div style="left:386px;top:188px;width:1px;height:21px;background:#a0a0a0"></div>
<div style="left:456px;top:188px;width:1px;height:21px;background:#a0a0a0"></div>
<div style="left:556px;top:188px;width:1px;height:21px;background:#a0a0a0"></div>
<div style="left:606px;top:188px;width:1px;height:21px;background:#a0a0a0"></div>
<div style="left:806px;top:188px;width:1px;height:21px;background:#a0a0a0"></div>
<div style="left:316px;top:188px;width:1px;height:21px;background:#a0a0a0"></div>
<svg style="left:319px;top:190px" width="16" height="18" viewBox="0 0 16 18"><path d="M3.500 1.500h11c1 0 1.200 1.200.2 1.500h-1.200l-2 13H1.500c-1 0-1-1.500 0-1.500h1z" fill="#b9e27a" stroke="#5b9421" stroke-width=".9"/></svg>
<div class="t" style="left:340px;top:192px;font-size:12px;letter-spacing:-0.9px">SCPT</div>
<div class="t" style="left:459px;top:192px;font-size:12px;letter-spacing:-0.6px">rvr_dec_resurrect...</div>
<div class="t" style="left:560px;top:192px;font-size:12px;letter-spacing:-0.9px">MSGB</div>
<div class="t" style="left:610px;top:192px;letter-spacing:-0.2px;">Are you sure you want to permanently ...</div>
<div style="left:316px;top:540px;width:1577px;height:2px;background:#a4a4a4"></div>
<div style="left:1893px;top:167px;width:18px;height:375px;background:#f0f0f0"></div>
<svg style="left:1898px;top:173px" width="9" height="6" viewBox="0 0 9 6"><path d="M1 4.5L4.5 1.500L8 4.5" fill="none" stroke="#505050" stroke-width="1.600"/></svg>
<svg style="left:1898px;top:530px" width="9" height="6" viewBox="0 0 9 6"><path d="M1 1.500L4.5 4.5L8 1.500" fill="none" stroke="#505050" stroke-width="1.600"/></svg>
<div style="left:1895px;top:459px;width:14px;height:65px;background:#c1c1c1"></div>
<div style="left:1891px;top:188px;width:2px;height:352px;background:#b8b8b8"></div>
<div style="left:1911px;top:141px;width:1px;height:720px;background:#a0a0a0"></div>
<div style="left:316px;top:141px;width:1px;height:854px;background:#696969"></div>
<div style="left:310px;top:763px;width:1px;height:232px;background:#696969"></div>
<!-- lowerpanels -->
<div style="left:317px;top:546px;width:732px;height:314px;border:1px solid #8a8a8a;border-left:none"></div>
<div style="left:340px;top:563px;width:1px;height:270px;background:#696969"></div>
<div style="left:340px;top:563px;width:704px;height:1px;background:#696969"></div>
<div style="left:341px;top:564px;width:702px;height:1px;background:#a0a0a0"></div>
<div style="left:322px;top:553px;width:726px;height:1px;background:#dcdcdc"></div>
<div style="left:340px;top:832px;width:704px;height:1px;background:#fafafa"></div>
<div style="left:1043px;top:564px;width:1px;height:269px;background:#fafafa"></div>
<div style="left:343px;top:835px;width:22px;height:20px;background:#e1e1e1;border:1px solid #adadad;text-align:center;line-height:18px;font-size:12px;color:#000">#</div>
<div style="left:371px;top:835px;width:22px;height:20px;background:#e1e1e1;border:1px solid #adadad;text-align:center;line-height:18px;font-size:12px;color:#000">¶</div>
<div class="t" style="left:956px;top:838px;letter-spacing:-0.2px;font-size:12px;letter-spacing:-0.35px">Buchstaben :</div>
<div class="t" style="left:1032px;top:838px;font-size:12px">7</div>
<div style="left:1027px;top:566px;width:16px;height:266px;background:#f5f5f5"></div>
<svg style="left:1030px;top:570px" width="9" height="6" viewBox="0 0 9 6"><path d="M1 4.5L4.5 1.500L8 4.5" fill="none" stroke="#c0c0c0" stroke-width="1.600"/></svg>
<svg style="left:1030px;top:822px" width="9" height="6" viewBox="0 0 9 6"><path d="M1 1.500L4.5 4.5L8 1.500" fill="none" stroke="#c0c0c0" stroke-width="1.600"/></svg>
<div style="left:1053px;top:546px;width:859px;height:314px;border:1px solid #7a7a7a;border-right:2px solid #6e6e6e"></div>
<div style="left:1058px;top:553px;width:848px;height:1px;background:#dcdcdc"></div>
<div style="left:1061px;top:550px;width:52px;height:8px;background:#f0f0f0"></div>
<div class="t" style="left:1064px;top:547px;letter-spacing:-0.5px">Übersetzt</div>
<div style="left:1078px;top:563px;width:828px;height:270px;background:#fff;border-top:1px solid #696969;border-left:1px solid #696969;border-bottom:1px solid #e3e3e3;border-right:1px solid #e3e3e3"></div>
<div style="left:1079px;top:564px;width:1px;height:268px;background:#a0a0a0"></div>
<div style="left:1079px;top:564px;width:826px;height:1px;background:#a0a0a0"></div>
<div style="left:1889px;top:566px;width:16px;height:266px;background:#f0f0f0"></div>
<svg style="left:1893px;top:570px" width="9" height="6" viewBox="0 0 9 6"><path d="M1 4.5L4.5 1.500L8 4.5" fill="none" stroke="#c0c0c0" stroke-width="1.600"/></svg>
<svg style="left:1893px;top:822px" width="9" height="6" viewBox="0 0 9 6"><path d="M1 1.500L4.5 4.5L8 1.500" fill="none" stroke="#c0c0c0" stroke-width="1.600"/></svg>
<div style="left:1079px;top:835px;width:22px;height:20px;background:#e1e1e1;border:1px solid #adadad;text-align:center;line-height:18px;font-size:12px;color:#000">#</div>
<div style="left:1107px;top:835px;width:22px;height:20px;background:#e1e1e1;border:1px solid #adadad;text-align:center;line-height:18px;font-size:12px;color:#000">¶</div>
<div style="left:1135px;top:835px;width:22px;height:20px;background:#cccccc;border:1px solid #bfbfbf;text-align:center;line-height:18px;font-size:12px;color:#a0a0a0">A</div>
<div style="left:1161px;top:835px;width:22px;height:20px;background:#cccccc;border:1px solid #bfbfbf;text-align:center;line-height:18px;font-size:12px;color:#a0a0a0">a</div>
<div style="left:1187px;top:835px;width:28px;height:20px;background:#cccccc;border:1px solid #bfbfbf;text-align:center;line-height:18px;font-size:12px;color:#a0a0a0">Ab</div>
<div class="t" style="left:1818px;top:838px;font-size:12px;letter-spacing:-0.35px">Buchstaben :</div>
<div class="t" style="left:1894px;top:838px;font-size:12px">0</div>
<div style="left:316px;top:859px;width:1595px;height:1px;background:#696969"></div>
<div style="left:316px;top:864px;width:1595px;height:1px;background:#696969"></div>
<div style="left:316px;top:865px;width:1596px;height:130px;border:2px solid #6e6e6e;border-top:none;border-left:none"></div>
<div style="left:318px;top:886px;width:1590px;height:1px;background:#e4e4e4"></div>
<div style="left:318px;top:865px;width:74px;height:22px;background:#fff;border:1px solid #dcdcdc;border-bottom:none"></div>
<div class="t" style="left:325px;top:868px;letter-spacing:-0.45px">Kommentare</div>
<div style="left:392px;top:867px;width:128px;height:19px;background:#f0f0f0;border:1px solid #dcdcdc;border-left:none"></div>
<div class="t" style="left:396px;top:870px;letter-spacing:-0.2px;">Verknüpfte Mod Einträge</div>
<div style="left:520px;top:867px;width:65px;height:19px;background:#f0f0f0;border:1px solid #dcdcdc;border-left:none"></div>
<div class="t" style="left:526px;top:870px;letter-spacing:-0.2px;">Vorschläge</div>
<div style="left:585px;top:867px;width:63px;height:19px;background:#f0f0f0;border:1px solid #dcdcdc;border-left:none"></div>
<div class="t" style="left:591px;top:870px;letter-spacing:-0.2px;">Line history</div>
<div style="left:324px;top:890px;width:1579px;height:96px;background:#fff;border:1px solid #828282"></div>
<div style="left:1885px;top:892px;width:16px;height:92px;background:#f0f0f0"></div>
<svg style="left:1888px;top:897px" width="9" height="6" viewBox="0 0 9 6"><path d="M1 4.5L4.5 1.500L8 4.5" fill="none" stroke="#c0c0c0" stroke-width="1.600"/></svg>
<svg style="left:1888px;top:972px" width="9" height="6" viewBox="0 0 9 6"><path d="M1 1.500L4.5 4.5L8 1.500" fill="none" stroke="#c0c0c0" stroke-width="1.600"/></svg>
<!-- statusbar -->
<div class="s" style="left:9px;top:1003px;letter-spacing:-0.27px">Lignes sélectionnées :</div>
<div class="s" style="left:133px;top:1003px;letter-spacing:-0.2px">83</div>
<div style="left:0px;top:107px;width:1920px;height:921px;border:1px solid #696969;border-top:none"></div>
<div style="left:1px;top:107px;width:1918px;height:920px;border:4px solid #fff;border-right-width:3px;border-top-width:3px"></div>
<div style="left:0px;top:87px;width:1px;height:20px;background:#696969"></div>
<div style="left:1919px;top:87px;width:1px;height:20px;background:#696969"></div>
<div style="left:5px;top:998px;width:1911px;height:1px;background:#e4e4e4"></div>
<div style="left:0px;top:1031px;width:7px;height:16px;background:#f6f6f6;border-top:1px solid #a0a0a0"></div>
<div style="left:1598px;top:1001px;width:26px;height:20px;background:#fff;color:#000;text-align:center;line-height:19px;font-size:12px;letter-spacing:-0.3px;border:1px solid rgba(0,0,0,.14);border-top-color:rgba(255,255,255,.55);border-left-color:rgba(255,255,255,.55)">64</div>
<div style="left:1625px;top:1001px;width:21px;height:20px;background:#ff0000;color:#7a0000;text-align:center;line-height:19px;font-size:12px;letter-spacing:-0.3px;border:1px solid rgba(0,0,0,.14);border-top-color:rgba(255,255,255,.55);border-left-color:rgba(255,255,255,.55)">4</div>
<div style="left:1646px;top:1001px;width:20px;height:20px;background:#ffc0cb;color:#000;text-align:center;line-height:19px;font-size:12px;letter-spacing:-0.3px;border:1px solid rgba(0,0,0,.14);border-top-color:rgba(255,255,255,.55);border-left-color:rgba(255,255,255,.55)">0</div>
<div style="left:1667px;top:1001px;width:21px;height:20px;background:#708090;color:#000;text-align:center;line-height:19px;font-size:12px;letter-spacing:-0.3px;border:1px solid rgba(0,0,0,.14);border-top-color:rgba(255,255,255,.55);border-left-color:rgba(255,255,255,.55)">0</div>
<div style="left:1688px;top:1001px;width:20px;height:20px;background:#9acd32;color:#000;text-align:center;line-height:19px;font-size:12px;letter-spacing:-0.3px;border:1px solid rgba(0,0,0,.14);border-top-color:rgba(255,255,255,.55);border-left-color:rgba(255,255,255,.55)">0</div>
<div style="left:1709px;top:1001px;width:20px;height:20px;background:#00bfff;color:#000;text-align:center;line-height:19px;font-size:12px;letter-spacing:-0.3px;border:1px solid rgba(0,0,0,.14);border-top-color:rgba(255,255,255,.55);border-left-color:rgba(255,255,255,.55)">0</div>
<div style="left:1730px;top:1001px;width:20px;height:20px;background:#ff1493;color:#000;text-align:center;line-height:19px;font-size:12px;letter-spacing:-0.3px;border:1px solid rgba(0,0,0,.14);border-top-color:rgba(255,255,255,.55);border-left-color:rgba(255,255,255,.55)">0</div>
<div style="left:1751px;top:1001px;width:20px;height:20px;background:#ffff00;color:#000;text-align:center;line-height:19px;font-size:12px;letter-spacing:-0.3px;border:1px solid rgba(0,0,0,.14);border-top-color:rgba(255,255,255,.55);border-left-color:rgba(255,255,255,.55)">0</div>
<div style="left:1772px;top:1001px;width:20px;height:20px;background:#ffa500;color:#000;text-align:center;line-height:19px;font-size:12px;letter-spacing:-0.3px;border:1px solid rgba(0,0,0,.14);border-top-color:rgba(255,255,255,.55);border-left-color:rgba(255,255,255,.55)">0</div>
<div style="left:1793px;top:1001px;width:26px;height:20px;background:#00ffff;color:#000;text-align:center;line-height:19px;font-size:12px;letter-spacing:-0.3px;border:1px solid rgba(0,0,0,.14);border-top-color:rgba(255,255,255,.55);border-left-color:rgba(255,255,255,.55)">15</div>
<div style="left:1820px;top:1001px;width:20px;height:20px;background:#f5deb3;color:#000;text-align:center;line-height:19px;font-size:12px;letter-spacing:-0.3px;border:1px solid rgba(0,0,0,.14);border-top-color:rgba(255,255,255,.55);border-left-color:rgba(255,255,255,.55)">0</div>
<div style="left:1841px;top:1001px;width:21px;height:20px;background:#008000;color:#000;text-align:center;line-height:19px;font-size:12px;letter-spacing:-0.3px;border:1px solid rgba(0,0,0,.14);border-top-color:rgba(255,255,255,.55);border-left-color:rgba(255,255,255,.55)">0</div>
<div style="left:1874px;top:1001px;width:25px;height:20px;background:#f4f4f4;color:#000;text-align:center;line-height:19px;font-size:12px;letter-spacing:-0.3px;border:1px solid rgba(0,0,0,.14);border-top-color:rgba(255,255,255,.55);border-left-color:rgba(255,255,255,.55)">83</div>
<div class="s" style="left:1866px;top:1003px;">/</div>
<!-- taskbar -->
<div style="left:0px;top:1050px;width:1920px;height:30px;background:#1b1b2f"></div>
<svg style="left:9px;top:1056px" width="18" height="17" viewBox="0 0 18 17"><path d="M.8 3l6.700-1v6.300H.8zM8.300 1.900L17.300.6v7.700H8.300zM.8 9.100h6.700v6.300L.8 14.400zM8.300 9.100h9v7.700l-9-1.300z" fill="#fff"/></svg>
<svg style="left:45px;top:1056px" width="18" height="18" viewBox="0 0 18 18"><circle cx="9" cy="9" r="6.700" fill="none" stroke="#fff" stroke-width="2.100"/></svg>
<svg style="left:81px;top:1056px" width="18" height="18" viewBox="0 0 18 18"><g fill="none" stroke="#fff" stroke-width="1.100"><path d="M1.500 3V1.500h11V3M1.500 14v1.500h11V14"/><rect x="1.500" y="5" width="11" height="7"/></g><path d="M15 1h2v1.800h-2zM15 4.500h2V7h-2zM15.500 9.500h1.300V16h-1.300z" fill="#fff"/></svg>
<svg style="left:120px;top:1056px" width="17" height="18" viewBox="0 0 17 18"><path fill-rule="evenodd" d="M1 9.500C1 4.500 5 .5 9.500.5 14 .5 16 4.500 16 8.200V10.500H6c0 2.600 2.500 4 5 4 2 0 3.600-.7 4.300-1.100V16c-1.100.6-2.800 1.200-5.300 1.200-4.600 0-7.200-3-7.200-6.300 0-2.500 1.500-4.300 3-5C4.200 6 2 7.500 1 9.500zM6.100 7.600h5.500c0-1.800-1-3-2.600-3-1.500 0-2.700 1.400-2.900 3z" fill="#1e88e5"/></svg>
<svg style="left:157px;top:1057px" width="18" height="15" viewBox="0 0 18 15"><path d="M.8 1h5.500l1.400 1.600H17V14H.8z" fill="#f3cd62"/><path d="M.8 4h16.200v10H.8z" fill="#fbe7a0"/><path d="M4 8.200h10V14H4z" fill="#3d9be0"/><path d="M6.200 10.500h5.600V14H6.200z" fill="#fbe7a0"/></svg>
<svg style="left:194px;top:1056px" width="17" height="17" viewBox="0 0 17 17"><path d="M5.500 4.500V3.500a3 3 0 016 0v1" fill="none" stroke="#fff" stroke-width="1.100"/><rect x="1" y="4.500" width="15" height="11.500" fill="#fff"/><rect x="4.600" y="6.800" width="3.300" height="3.300" fill="#f25022"/><rect x="9" y="6.800" width="3.300" height="3.300" fill="#7fba00"/><rect x="4.600" y="11.200" width="3.300" height="3.300" fill="#00a4ef"/><rect x="9" y="11.200" width="3.300" height="3.300" fill="#ffb900"/></svg>
<svg style="left:230px;top:1055px" width="19" height="19" viewBox="0 0 19 19"><circle cx="9.500" cy="9.500" r="7.800" fill="#134a16" stroke="#3fc43f" stroke-width="1.800"/><text x="9.500" y="13.500" text-anchor="middle" font-family="Liberation Sans,sans-serif" font-weight="700" font-size="10" fill="#7fe07f">U</text></svg>
<svg style="left:267px;top:1055px" width="19" height="19" viewBox="0 0 19 19"><circle cx="9.500" cy="9.500" r="7.800" fill="#3a0808" stroke="#e42424" stroke-width="1.800"/><g transform="translate(9.500 9.500)" fill="#e42424"><rect x="-1" y="-5" width="2" height="3" transform="rotate(0)"/><rect x="-1" y="-5" width="2" height="3" transform="rotate(60)"/><rect x="-1" y="-5" width="2" height="3" transform="rotate(120)"/><rect x="-1" y="-5" width="2" height="3" transform="rotate(180)"/><rect x="-1" y="-5" width="2" height="3" transform="rotate(240)"/><rect x="-1" y="-5" width="2" height="3" transform="rotate(300)"/><circle r="3.200"/><circle r="1.300" fill="#3a0808"/></g></svg>
<svg style="left:304px;top:1055px" width="20" height="20" viewBox="0 0 20 20"><defs><radialGradient id="ff" cx=".6" cy=".2" r=".9"><stop offset="0" stop-color="#ffe24a"/><stop offset=".45" stop-color="#ff9a1f"/><stop offset="1" stop-color="#e8342a"/></radialGradient></defs><circle cx="10" cy="10.500" r="8.500" fill="url(#ff)"/><circle cx="10.500" cy="9.500" r="4.800" fill="#4a3aa8"/><path d="M3 5c2 0 3 1 4 3 2-1 4-1 5 1-2 0-3 1-3 3 0 2 2 3 4 2-1 3-5 4-8 2s-4-7-2-11z" fill="#ff7a1a"/></svg>
<svg style="left:341px;top:1055px" width="20" height="20" viewBox="0 0 20 20"><circle cx="10" cy="10" r="7" fill="none" stroke="#5a5850" stroke-width="3"/><circle cx="10" cy="10" r="7" fill="none" stroke="#2a2a2a" stroke-width="1.400" stroke-dasharray="3 2"/></svg>
<svg style="left:380px;top:1056px" width="17" height="17" viewBox="0 0 17 17"><path d="M4 2.500h12V15H1.500z" fill="#a9d8f0" stroke="#d8ecf6" stroke-width=".8"/><path d="M4.500 5.500h10M4 8h10.500M3.500 10.500h11M3 13h11.500" stroke="#6fb0d4" stroke-width=".8"/><path d="M5 .8v3M7.500 .8v3M10 .8v3M12.500 .8v3M15 .8v3" stroke="#e8f2f8" stroke-width="1.100"/></svg>
<div style="left:407px;top:1050px;width:33px;height:30px;background:#3e3e54"></div>
<div style="left:440px;top:1050px;width:4px;height:30px;background:#2c2c42"></div>
<svg style="left:418px;top:1056px" width="14" height="18" viewBox="0 0 14 18"><ellipse cx="7" cy="9" rx="5.200" ry="7.600" fill="#111" stroke="#111"/><path d="M7 3.500c-1.500 0-2.300 1.100-2.300 2.400 0 1 .5 1.800.3 2.800-.3 1.400-.8 3-.5 5h1.600l.4-3.400h1l.4 3.400h1.600c.3-2-.2-3.600-.5-5-.2-1 .3-1.800.3-2.800 0-1.300-.8-2.400-2.300-2.400z" fill="#fff"/></svg>
<svg style="left:453px;top:1056px" width="20" height="17" viewBox="0 0 20 17"><path d="M1 10c0-4.500 3.500-7 8-7s7.500 2.500 7.500 6-2.500 3.500-4.500 3.500-1 3-4 3S1 13.500 1 10z" fill="#dfe9f2" stroke="#9ab0c4" stroke-width=".7"/><circle cx="4.500" cy="8.500" r="1.500" fill="#e33"/><circle cx="8" cy="6" r="1.500" fill="#fc3"/><circle cx="12" cy="6.500" r="1.500" fill="#3a3"/><circle cx="5" cy="12" r="1.500" fill="#38e"/><path d="M15.500 .5l1.500 .3-.8 8-2-.3z" fill="#e0a040"/><path d="M14.200 8.500l2 .3-.4 6-1.600-.5z" fill="#d07a28"/></svg>
<div style="left:152px;top:1078px;width:28px;height:2px;background:#8ec8f0"></div>
<div style="left:300px;top:1078px;width:28px;height:2px;background:#8ec8f0"></div>
<div style="left:337px;top:1078px;width:28px;height:2px;background:#8ec8f0"></div>
<div style="left:374px;top:1078px;width:28px;height:2px;background:#8ec8f0"></div>
<div style="left:407px;top:1078px;width:37px;height:2px;background:#8ec8f0"></div>
<div style="left:448px;top:1078px;width:28px;height:2px;background:#8ec8f0"></div>
<svg style="left:1761px;top:1060px" width="14" height="9" viewBox="0 0 14 9"><path d="M1 8l6-6.500L13 8" fill="none" stroke="#fff" stroke-width="1.300"/></svg>
<svg style="left:1784px;top:1058px" width="17" height="15" viewBox="0 0 17 15"><g fill="none" stroke="#fff" stroke-width="1.100"><rect x="3.500" y="1.500" width="12" height="8"/><path d="M9.500 9.500v3.500M5 13.500h9"/><rect x=".6" y="1.500" width="3" height="3.500" fill="#1b1b2f"/><path d="M2 5v8.500"/></g></svg>
<svg style="left:1807px;top:1057px" width="19" height="16" viewBox="0 0 19 16"><g fill="none" stroke="#fff" stroke-width="1.100"><path d="M1.500 5.500h2.500l3.500-3.500v12L4 10.500H1.500z"/><path d="M10 6c.8 1.200.8 2.800 0 4M12 4c1.600 2.400 1.600 5.600 0 8M14 2c2.500 3.600 2.500 8.400 0 12"/></g></svg>
<div class="s" style="left:1834px;top:1057px;color:#fff;letter-spacing:-0.35px">23:03</div>
<svg style="left:1878px;top:1056px" width="18" height="18" viewBox="0 0 18 18"><path d="M1.500 1.500h15v11.500h-4.500L9 16l-3-3H1.500z" fill="none" stroke="#fff" stroke-width="1.200"/></svg>
<div style="left:1915px;top:1050px;width:1px;height:30px;background:#6a6a7a"></div>
<!-- cover -->
<svg style="left:80px;top:767px" width="159" height="227" viewBox="0 0 159 227"><defs><filter id="nz" x="0" y="0" width="1" height="1"><feTurbulence type="fractalNoise" baseFrequency="0.07" numOctaves="4" seed="11" result="n"/><feColorMatrix in="n" type="matrix" values="0 0 0 0 0  0 0 0 0 0  0 0 0 0 0  1.1 0.9 0 0 -0.62" result="a"/><feFlood flood-color="#4a2a0a"/><feComposite in2="a" operator="in"/></filter><filter id="nz2" x="0" y="0" width="1" height="1"><feTurbulence type="fractalNoise" baseFrequency="0.05" numOctaves="3" seed="3" result="n"/><feColorMatrix in="n" type="matrix" values="0 0 0 0 0  0 0 0 0 0  0 0 0 0 0  0 1.2 0.6 0 -0.62" result="a"/><feFlood flood-color="#e6c890"/><feComposite in2="a" operator="in"/></filter><linearGradient id="pg" x1="0" y1="0" x2="0" y2="1"><stop offset="0" stop-color="#c29a62"/><stop offset=".3" stop-color="#b07a3c"/><stop offset=".52" stop-color="#9c5e24"/><stop offset=".75" stop-color="#b4783a"/><stop offset="1" stop-color="#c09258"/></linearGradient><radialGradient id="vg" cx=".5" cy=".5" r=".62"><stop offset=".55" stop-color="#5a3c18" stop-opacity="0"/><stop offset="1" stop-color="#5a3c18" stop-opacity=".45"/></radialGradient><linearGradient id="tg" x1="0" y1="0" x2="0" y2="1"><stop offset="0" stop-color="#f6e8b8"/><stop offset=".5" stop-color="#d6b46a"/><stop offset="1" stop-color="#f0dca0"/></linearGradient></defs><rect width="159" height="227" fill="#6c5232"/><rect x=".75" y=".75" width="157.500" height="225.500" fill="none" stroke="#56401f" stroke-width="1.500"/><path d="M22 10h42l5 5h21l5-5h42l9 10v72l-4 7v30l4 7v78l-9 10H95l-5-4H69l-5 4H22l-12-10v-78l4-7V99l-4-7V20z" fill="url(#pg)"/><rect width="159" height="227" filter="url(#nz2)" opacity=".6"/><rect width="159" height="227" filter="url(#nz)" opacity=".6"/><path d="M38 38h85L80.500 198z" fill="#5c340f" opacity=".86"/><path d="M80.500 46l13 42-7 5 5 30-11 68-10-68 6-30-8-6z" fill="#b88e52" opacity=".85"/><path d="M80.500 60l6 27-6 6-5-6zM80.500 121l4 20-4 42-4-42z" fill="#5c340f" opacity=".8"/><path d="M51 44c-2 4-2 9 1 13M112 42c2 2 4 3 2 6-1 2-3 2-2 6" stroke="#d8ba84" stroke-width="1.300" fill="none"/><rect width="159" height="227" fill="url(#vg)"/><path d="M12 104h135v26H12z" fill="#4a2c0e" opacity=".4"/><text x="79.500" y="101.500" text-anchor="middle" font-family="Liberation Serif,serif" font-size="7.500" font-weight="700" fill="#241406" letter-spacing=".2">The Elder Scrolls III</text><text x="80" y="126" text-anchor="middle" font-family="Liberation Serif,serif" font-size="22" font-weight="700" fill="url(#tg)" stroke="#1e1004" stroke-width="1.600" paint-order="stroke" textLength="126" lengthAdjust="spacingAndGlyphs"><tspan font-size="27">M</tspan>ORROWIN<tspan font-size="27">D</tspan></text><text x="79.500" y="10" text-anchor="middle" font-family="Liberation Serif,serif" font-size="6" fill="#a08458">PC ROM</text><text x="79.500" y="222" text-anchor="middle" font-family="Liberation Serif,serif" font-size="6" fill="#a08458">BP PC</text><text x="4" y="219" font-family="Liberation Sans,sans-serif" font-size="6.500" font-weight="700" fill="#b8b0a8"><tspan fill="#d02020">B</tspan>ethesda</text><rect x="145" y="205" width="10" height="15" fill="#d8d8d8" stroke="#222" stroke-width=".6"/><text x="150" y="214" text-anchor="middle" font-family="Liberation Sans,sans-serif" font-size="6" font-weight="700" fill="#111">RP</text></svg>
<!-- dialog -->
<div style="left:216px;top:208px;width:815px;height:594px;background:#f0f0f0;border:1px solid #3c80c4;box-shadow:2px 3px 11px 0 rgba(0,0,0,.3)"></div>
<div style="left:217px;top:209px;width:813px;height:30px;background:#fff"></div>
<div style="left:1029px;top:210px;width:1px;height:591px;background:#a8cdec"></div>
<div style="left:217px;top:800px;width:813px;height:1px;background:#a8cdec"></div>
<div class="s" style="left:245px;top:216px;letter-spacing:-0.2px">Skripte</div>
<svg style="left:228px;top:216.500px" width="10" height="16" viewBox="0 0 10 15.500"><path d="M5 .7C3 .7 2.300 2 2.400 3.600 1.100 5 .5 6.800.7 8.800c.2 2 1.500 4 3 5.800h2.600c1.500-1.800 2.800-3.800 3-5.800.2-2-.4-3.800-1.700-5.200C7.700 2 7 .7 5 .7z" fill="#fff" stroke="#000" stroke-width="1.400"/><path d="M5 1.500c-1 0-1.600.8-1.500 1.800l.8.900-.5 1.300.7-.4L5 4.300l.5.800.7.400-.5-1.300.8-.9C6.600 2.300 6 1.500 5 1.500zM3.300 8.500l.7 5.500h.7V9.500h.600V14h.7l.7-5.500z" fill="#000"/></svg>
<svg style="left:900px;top:210px" width="129" height="29" viewBox="0 0 129 29"><g stroke="#000" stroke-width="1" fill="none" shape-rendering="crispEdges"><path d="M11 13.500h10"/><path d="M56.500 8.500h9v9h-9z"/></g><path d="M102 8.200l10 10M112 8.200l-10 10" stroke="#000" stroke-width="1.100" fill="none"/></svg>
<div style="left:217px;top:239px;width:146px;height:538px;background:#fff;border:1px solid #000;border-left:none"></div>
<div style="left:217px;top:240px;width:145px;height:19px;background:#808080"></div>
<div class="t" style="left:219px;top:243px;color:#fff;letter-spacing:-0.25px">&lt;ALLE&gt;</div>
<div class="t" style="left:300px;top:242px;color:#fff;width:58px;text-align:right;font-size:12px;letter-spacing:-0.2px">0 / 67</div>
<div class="t" style="left:219px;top:262px;color:#000;letter-spacing:-0.25px">rvr_dec_config</div>
<div class="t" style="left:300px;top:261px;color:#000;width:58px;text-align:right;font-size:12px;letter-spacing:-0.2px">0 / 6</div>
<div class="t" style="left:219px;top:281px;color:#000;letter-spacing:-0.25px">rvr_dec_derived_s...</div>
<div class="t" style="left:300px;top:280px;color:#000;width:58px;text-align:right;font-size:12px;letter-spacing:-0.2px">0 / 4</div>
<div class="t" style="left:219px;top:300px;color:#000;letter-spacing:-0.25px">rvr_dec_main_menu</div>
<div class="t" style="left:300px;top:299px;color:#000;width:58px;text-align:right;font-size:12px;letter-spacing:-0.2px">0 / 39</div>
<div class="t" style="left:219px;top:319px;color:#000;letter-spacing:-0.25px">rvr_dec_posrot</div>
<div class="t" style="left:300px;top:318px;color:#000;width:58px;text-align:right;font-size:12px;letter-spacing:-0.2px">0 / 2</div>
<div class="t" style="left:219px;top:338px;color:#000;letter-spacing:-0.25px">rvr_dec_resurrect_...</div>
<div class="t" style="left:300px;top:337px;color:#000;width:58px;text-align:right;font-size:12px;letter-spacing:-0.2px">0 / 10</div>
<div class="t" style="left:219px;top:357px;color:#000;letter-spacing:-0.25px">rvr_dec_resurrection</div>
<div class="t" style="left:300px;top:356px;color:#000;width:58px;text-align:right;font-size:12px;letter-spacing:-0.2px">0 / 2</div>
<div class="t" style="left:219px;top:376px;color:#000;letter-spacing:-0.25px">rvr_dec_scaling</div>
<div class="t" style="left:300px;top:375px;color:#000;width:58px;text-align:right;font-size:12px;letter-spacing:-0.2px">0 / 2</div>
<div class="t" style="left:219px;top:395px;color:#000;letter-spacing:-0.25px">rvr_dec_start_script</div>
<div class="t" style="left:300px;top:394px;color:#000;width:58px;text-align:right;font-size:12px;letter-spacing:-0.2px">0 / 2</div>
<div style="left:367px;top:239px;width:663px;height:26px;background:#696969"></div>
<div style="left:372px;top:243px;width:283px;height:17px;background:#fff"></div>
<div style="left:661px;top:243px;width:284px;height:17px;background:#fff"></div>
<div style="left:1007px;top:242px;width:21px;height:20px;background:#ebebeb;border:1px solid #dcdcdc"></div>
<svg style="left:1009px;top:243px" width="17" height="17" viewBox="0 0 17 17"><path d="M2 8L9.300 2.800c1.400-.6 2.700-.2 3.600.8L15 7.500 9 14.700C6 13.700 3.500 11.500 2 8z" fill="#dcb266" stroke="#9a7632" stroke-width=".6"/><path d="M4 9.500l4.500 4M6 8l4.500 4.500M8 6.500l4 4.500" stroke="#c4963e" stroke-width=".7"/><path d="M8.800 3.600l5.400 5.600M10 3l5 5" stroke="#7a5c2a" stroke-width=".7" stroke-dasharray="1 .7"/><path d="M12.600 3l1.600-1.700L16 3l-1.700 1.800z" fill="#9a7a3a" stroke="#6a4e1e" stroke-width=".4"/></svg>
<div style="left:367px;top:265px;width:663px;height:177px;background:#fff;border:1px solid #000"></div>
<div style="left:657px;top:267px;width:1px;height:18px;background:#e5e5e5"></div>
<div style="left:946px;top:267px;width:1px;height:18px;background:#e5e5e5"></div>
<div style="left:969px;top:267px;width:1px;height:18px;background:#e5e5e5"></div>
<div style="left:991px;top:267px;width:1px;height:18px;background:#e5e5e5"></div>
<div style="left:1011px;top:267px;width:1px;height:18px;background:#e5e5e5"></div>
<div style="left:368px;top:285px;width:644px;height:1px;background:#a0a0a0"></div>
<div class="t" style="left:376px;top:269px;font-size:12px;letter-spacing:-0.6px">Originaler Text</div>
<div class="t" style="left:665px;top:269px;font-size:12px;letter-spacing:-0.6px">Übersetzter Text</div>
<div style="left:368px;top:286px;width:289px;height:21px;background:#808080"></div>
<div style="left:368px;top:307px;width:644px;height:1px;background:#a0a0a0"></div>
<div style="left:657px;top:286px;width:1px;height:22px;background:#a0a0a0"></div>
<div class="t" style="left:372px;top:290px;color:#fff;letter-spacing:-0.2px;">Please take a moment and configure the Decorator plugin...</div>
<div style="left:946px;top:286px;width:66px;height:22px;overflow:hidden"><div class="vb" style="left:1px;top:0px;width:22px;border-width:1px;line-height:19px;border-color:#2f8f2f;box-shadow:inset 0 0 0 1px #2f8f2f88"><b>V</b></div><div class="vb" style="left:24px;top:0px;width:22px;border-width:2px;line-height:17px;border-color:#e8a53a;box-shadow:inset 0 0 0 1px #e8a53a88"><b>X</b></div><div class="vb" style="left:46px;top:0px;width:18px;border-width:1px;line-height:19px;border-color:#e23b3b;box-shadow:inset 0 0 0 1px #e23b3b88"><b>I</b></div></div>
<div style="left:368px;top:308px;width:644px;height:22px;background:#00ffff"></div>
<div style="left:368px;top:329px;width:644px;height:1px;background:#a0a0a0"></div>
<div style="left:657px;top:308px;width:1px;height:22px;background:#a0a0a0"></div>
<div class="t" style="left:371px;top:312px;letter-spacing:-0.2px;">OK</div>
<div class="t" style="left:660px;top:312px;letter-spacing:-0.2px;">OK</div>
<div style="left:946px;top:308px;width:66px;height:22px;overflow:hidden"><div class="vb" style="left:1px;top:0px;width:22px;border-width:1px;line-height:19px;border-color:#2f8f2f;box-shadow:inset 0 0 0 1px #2f8f2f88"><b>V</b></div><div class="vb" style="left:24px;top:0px;width:22px;border-width:2px;line-height:17px;border-color:#e8a53a;box-shadow:inset 0 0 0 1px #e8a53a88"><b>X</b></div><div class="vb" style="left:46px;top:0px;width:18px;border-width:1px;line-height:19px;border-color:#e23b3b;box-shadow:inset 0 0 0 1px #e23b3b88"><b>I</b></div></div>
<div style="left:368px;top:351px;width:644px;height:1px;background:#a0a0a0"></div>
<div style="left:657px;top:330px;width:1px;height:22px;background:#a0a0a0"></div>
<div class="t" style="left:372px;top:334px;letter-spacing:-0.2px;">Please remember the key you selected, if you forget it or ...</div>
<div style="left:946px;top:330px;width:66px;height:22px;overflow:hidden"><div class="vb" style="left:1px;top:0px;width:22px;border-width:1px;line-height:19px;border-color:#2f8f2f;box-shadow:inset 0 0 0 1px #2f8f2f88"><b>V</b></div><div class="vb" style="left:24px;top:0px;width:22px;border-width:2px;line-height:17px;border-color:#e8a53a;box-shadow:inset 0 0 0 1px #e8a53a88"><b>X</b></div><div class="vb" style="left:46px;top:0px;width:18px;border-width:1px;line-height:19px;border-color:#e23b3b;box-shadow:inset 0 0 0 1px #e23b3b88"><b>I</b></div></div>
<div style="left:368px;top:352px;width:644px;height:22px;background:#00ffff"></div>
<div style="left:368px;top:373px;width:644px;height:1px;background:#a0a0a0"></div>
<div style="left:657px;top:352px;width:1px;height:22px;background:#a0a0a0"></div>
<div class="t" style="left:371px;top:356px;letter-spacing:-0.2px;">OK.</div>
<div class="t" style="left:660px;top:356px;letter-spacing:-0.2px;">Okay.</div>
<div style="left:946px;top:352px;width:66px;height:22px;overflow:hidden"><div class="vb" style="left:1px;top:0px;width:22px;border-width:1px;line-height:19px;border-color:#2f8f2f;box-shadow:inset 0 0 0 1px #2f8f2f88"><b>V</b></div><div class="vb" style="left:24px;top:0px;width:22px;border-width:2px;line-height:17px;border-color:#e8a53a;box-shadow:inset 0 0 0 1px #e8a53a88"><b>X</b></div><div class="vb" style="left:46px;top:0px;width:18px;border-width:1px;line-height:19px;border-color:#e23b3b;box-shadow:inset 0 0 0 1px #e23b3b88"><b>I</b></div></div>
<div style="left:368px;top:395px;width:644px;height:1px;background:#a0a0a0"></div>
<div style="left:657px;top:374px;width:1px;height:22px;background:#a0a0a0"></div>
<div class="t" style="left:372px;top:378px;letter-spacing:-0.2px;">rvr_decorator</div>
<div style="left:946px;top:374px;width:66px;height:22px;overflow:hidden"><div class="vb" style="left:1px;top:0px;width:22px;border-width:1px;line-height:19px;border-color:#2f8f2f;box-shadow:inset 0 0 0 1px #2f8f2f88"><b>V</b></div><div class="vb" style="left:24px;top:0px;width:22px;border-width:2px;line-height:17px;border-color:#e8a53a;box-shadow:inset 0 0 0 1px #e8a53a88"><b>X</b></div><div class="vb" style="left:46px;top:0px;width:18px;border-width:1px;line-height:19px;border-color:#e23b3b;box-shadow:inset 0 0 0 1px #e23b3b88"><b>I</b></div></div>
<div style="left:368px;top:417px;width:644px;height:1px;background:#a0a0a0"></div>
<div style="left:657px;top:396px;width:1px;height:22px;background:#a0a0a0"></div>
<div class="t" style="left:372px;top:400px;letter-spacing:-0.2px;">rvr_decorator</div>
<div style="left:946px;top:396px;width:66px;height:22px;overflow:hidden"><div class="vb" style="left:1px;top:0px;width:22px;border-width:1px;line-height:19px;border-color:#2f8f2f;box-shadow:inset 0 0 0 1px #2f8f2f88"><b>V</b></div><div class="vb" style="left:24px;top:0px;width:22px;border-width:2px;line-height:17px;border-color:#e8a53a;box-shadow:inset 0 0 0 1px #e8a53a88"><b>X</b></div><div class="vb" style="left:46px;top:0px;width:18px;border-width:1px;line-height:19px;border-color:#e23b3b;box-shadow:inset 0 0 0 1px #e23b3b88"><b>I</b></div></div>
<div style="left:368px;top:439px;width:644px;height:1px;background:#a0a0a0"></div>
<div style="left:657px;top:418px;width:1px;height:21px;background:#a0a0a0"></div>
<div class="t" style="left:372px;top:422px;letter-spacing:-0.2px;">No item selected, please point your cursor at &nbsp;a pick-upab...</div>
<div style="left:946px;top:418px;width:66px;height:21px;overflow:hidden"><div class="vb" style="left:1px;top:0px;width:22px;border-width:1px;line-height:19px;border-color:#2f8f2f;box-shadow:inset 0 0 0 1px #2f8f2f88"><b>V</b></div><div class="vb" style="left:24px;top:0px;width:22px;border-width:2px;line-height:17px;border-color:#e8a53a;box-shadow:inset 0 0 0 1px #e8a53a88"><b>X</b></div><div class="vb" style="left:46px;top:0px;width:18px;border-width:1px;line-height:19px;border-color:#e23b3b;box-shadow:inset 0 0 0 1px #e23b3b88"><b>I</b></div></div>
<div style="left:1012px;top:266px;width:17px;height:175px;background:#f0f0f0"></div>
<svg style="left:1016px;top:271px" width="9" height="6" viewBox="0 0 9 6"><path d="M1 4.5L4.5 1.500L8 4.5" fill="none" stroke="#404040" stroke-width="1.600"/></svg>
<svg style="left:1016px;top:430px" width="9" height="6" viewBox="0 0 9 6"><path d="M1 1.500L4.5 4.5L8 1.500" fill="none" stroke="#404040" stroke-width="1.600"/></svg>
<div style="left:1014px;top:283px;width:14px;height:16px;background:#cdcdcd"></div>
<div class="t" style="left:372px;top:447px;letter-spacing:-0.2px;">rvr_dec_config</div>
<div style="left:367px;top:460px;width:332px;height:98px;background:#f0f0f0;border:2px solid #8a8a8a;border-right-color:#a8a8a8;border-bottom-color:#a8a8a8"></div>
<div class="t" style="left:371px;top:464px;letter-spacing:-0.19px">Please take a moment and configure the Decorator plugin. DO</div>
<div class="t" style="left:371px;top:477px;letter-spacing:-0.19px">NOT CLICK OK! Instead press a key on your keyboard that you</div>
<div class="t" style="left:371px;top:490px;letter-spacing:-0.19px">wish to bind with the Decorator menu. You will select items to</div>
<div class="t" style="left:371px;top:503px;letter-spacing:-0.19px">position/rotate with this key.</div>
<svg style="left:683px;top:469px" width="9" height="6" viewBox="0 0 9 6"><path d="M1 4.5L4.5 1.500L8 4.5" fill="none" stroke="#c8c8c8" stroke-width="1.600"/></svg>
<svg style="left:683px;top:543px" width="9" height="6" viewBox="0 0 9 6"><path d="M1 1.500L4.5 4.5L8 1.500" fill="none" stroke="#c8c8c8" stroke-width="1.600"/></svg>
<div style="left:703px;top:460px;width:327px;height:98px;background:#fff;border:2px solid #8a8a8a;border-right-color:#a8a8a8;border-bottom-color:#a8a8a8"></div>
<div style="left:1011px;top:463px;width:17px;height:92px;background:#f8f8f8"></div>
<svg style="left:1014px;top:469px" width="9" height="6" viewBox="0 0 9 6"><path d="M1 4.5L4.5 1.500L8 4.5" fill="none" stroke="#c8c8c8" stroke-width="1.600"/></svg>
<svg style="left:1014px;top:543px" width="9" height="6" viewBox="0 0 9 6"><path d="M1 1.500L4.5 4.5L8 1.500" fill="none" stroke="#c8c8c8" stroke-width="1.600"/></svg>
<div style="left:367px;top:569px;width:663px;height:35px;border:1px solid #dcdcdc"></div>
<div class="t" style="left:374px;top:562px;letter-spacing:-0.2px;background:#f0f0f0;padding:0 3px 0 2px">Kommentare</div>
<div style="left:370px;top:579px;width:657px;height:21px;background:#fff;border:1px solid #7a7a7a;border-right-color:#dcdcdc;border-bottom-color:#dcdcdc"></div>
<div class="t" style="left:373px;top:581px;letter-spacing:-0.2px;">MessageBox</div>
<div style="left:370px;top:613px;width:13px;height:13px;background:#fff;border:1px solid #333"></div>
<div class="t" style="left:389px;top:613px;letter-spacing:-0.2px;">Zeige Alternative Quelle</div>
<div style="left:842px;top:613px;width:13px;height:13px;background:#fff;border:1px solid #333"></div>
<div class="t" style="left:861px;top:613px;letter-spacing:-0.05px">"Übersetzten" Teil nicht anzeigen</div>
<div style="left:367px;top:632px;width:332px;height:145px;background:#f0f0f0;border:2px solid #8a8a8a;border-right-color:#a8a8a8;border-bottom-color:#a8a8a8;border-bottom-width:1px"></div>
<div style="left:369px;top:634px;width:19px;height:119px;background:#fff"></div>
<div style="left:389px;top:634px;width:290px;height:101px;background:#a0a0a0;overflow:hidden"><div class="t" style="left:49px;top:2px;letter-spacing:-0.22px"><span class="c" style="color:#1a1ae6">messagebox</span> <span class="c" style="background:#55a355;color:#2e7d32">"Please take a moment and configure the Decorator</span></div><div class="t" style="left:49px;top:15px;letter-spacing:-0.22px"><span class="c" style="color:#1a1ae6">set</span> controlvar to 1</div><div class="t" style="left:49px;top:28px;letter-spacing:-0.22px"><span class="c" style="color:#1a1ae6">return</span></div><div class="t" style="left:1px;top:41px;letter-spacing:-0.22px"><span class="c" style="color:#1a1ae6">endif</span></div><div class="t" style="left:1px;top:67px;letter-spacing:-0.22px"><span class="c" style="color:#1a1ae6">if</span> ( <span class="c" style="color:#1a1ae6">MenuMode</span> == 0) <span class="c" style="color:#2a8a2a">;true on this condition means the message</span></div><div class="t" style="left:49px;top:80px;letter-spacing:-0.22px"><span class="c" style="color:#1a1ae6">if</span> (temp_key &lt;= 2) <span class="c" style="color:#2a8a2a">;1 - mouse button - used to click ok</span></div><div class="t" style="left:97px;top:93px;letter-spacing:-0.22px"><span class="c" style="color:#1a1ae6">set</span> controlvar to 0 <span class="c" style="color:#2a8a2a">;re-show the message</span></div></div>
<div class="t" style="left:370px;top:635px;font-size:12px;letter-spacing:-0.5px;width:18px;text-align:center">24</div>
<div style="left:369px;top:648px;width:19px;height:1px;border-top:1px dotted #888"></div>
<div class="t" style="left:370px;top:648px;font-size:12px;letter-spacing:-0.5px;width:18px;text-align:center">25</div>
<div style="left:369px;top:661px;width:19px;height:1px;border-top:1px dotted #888"></div>
<div class="t" style="left:370px;top:661px;font-size:12px;letter-spacing:-0.5px;width:18px;text-align:center">26</div>
<div style="left:369px;top:674px;width:19px;height:1px;border-top:1px dotted #888"></div>
<div class="t" style="left:370px;top:674px;font-size:12px;letter-spacing:-0.5px;width:18px;text-align:center">27</div>
<div style="left:369px;top:687px;width:19px;height:1px;border-top:1px dotted #888"></div>
<div class="t" style="left:370px;top:687px;font-size:12px;letter-spacing:-0.5px;width:18px;text-align:center">28</div>
<div style="left:369px;top:700px;width:19px;height:1px;border-top:1px dotted #888"></div>
<div class="t" style="left:370px;top:700px;font-size:12px;letter-spacing:-0.5px;width:18px;text-align:center">29</div>
<div style="left:369px;top:713px;width:19px;height:1px;border-top:1px dotted #888"></div>
<div class="t" style="left:370px;top:713px;font-size:12px;letter-spacing:-0.5px;width:18px;text-align:center">30</div>
<div style="left:369px;top:726px;width:19px;height:1px;border-top:1px dotted #888"></div>
<div class="t" style="left:370px;top:726px;font-size:12px;letter-spacing:-0.5px;width:18px;text-align:center">31</div>
<div style="left:369px;top:739px;width:19px;height:1px;border-top:1px dotted #888"></div>
<div class="t" style="left:370px;top:739px;font-size:12px;letter-spacing:-0.5px;width:18px;text-align:center">32</div>
<div style="left:369px;top:752px;width:19px;height:1px;border-top:1px dotted #888"></div>
<div style="left:369px;top:634px;width:19px;height:1px;border-top:1px dotted #888"></div>
<div style="left:387px;top:634px;width:1px;height:119px;border-left:1px dotted #888"></div>
<div style="left:679px;top:634px;width:17px;height:101px;background:#f0f0f0"></div>
<svg style="left:683px;top:640px" width="9" height="6" viewBox="0 0 9 6"><path d="M1 4.5L4.5 1.500L8 4.5" fill="none" stroke="#404040" stroke-width="1.600"/></svg>
<svg style="left:683px;top:723px" width="9" height="6" viewBox="0 0 9 6"><path d="M1 1.500L4.5 4.5L8 1.500" fill="none" stroke="#404040" stroke-width="1.600"/></svg>
<div style="left:681px;top:674px;width:14px;height:16px;background:#cdcdcd"></div>
<div style="left:389px;top:735px;width:290px;height:17px;background:#f0f0f0"></div>
<svg style="left:395px;top:739px" width="6" height="9" viewBox="0 0 6 9"><path d="M4.5 1L1.500 4.5L4.5 8" fill="none" stroke="#404040" stroke-width="1.600"/></svg>
<svg style="left:667px;top:739px" width="6" height="9" viewBox="0 0 6 9"><path d="M1.500 1L4.5 4.5L1.500 8" fill="none" stroke="#404040" stroke-width="1.600"/></svg>
<div style="left:407px;top:737px;width:56px;height:14px;background:#cdcdcd"></div>
<div style="left:390px;top:755px;width:22px;height:20px;background:#e1e1e1;border:1px solid #adadad;text-align:center;line-height:18px;font-size:12px;color:#000">#</div>
<div style="left:418px;top:755px;width:22px;height:20px;background:#e1e1e1;border:1px solid #adadad;text-align:center;line-height:18px;font-size:12px;color:#000">¶</div>
<div class="t" style="left:609px;top:758px;letter-spacing:-0.17px">Buchstaben :</div>
<div class="t" style="left:685px;top:758px;font-size:12px">0</div>
<div style="left:703px;top:632px;width:327px;height:145px;background:#f0f0f0;border:2px solid #8a8a8a;border-right-color:#a8a8a8;border-bottom-color:#a8a8a8;border-bottom-width:1px"></div>
<div style="left:725px;top:634px;width:285px;height:101px;background:#a0a0a0"></div>
<div style="left:724px;top:634px;width:1px;height:119px;background:#8a8a8a"></div>
<svg style="left:1014px;top:640px" width="9" height="6" viewBox="0 0 9 6"><path d="M1 4.5L4.5 1.500L8 4.5" fill="none" stroke="#c8c8c8" stroke-width="1.600"/></svg>
<svg style="left:1014px;top:723px" width="9" height="6" viewBox="0 0 9 6"><path d="M1 1.500L4.5 4.5L8 1.500" fill="none" stroke="#c8c8c8" stroke-width="1.600"/></svg>
<svg style="left:731px;top:739px" width="6" height="9" viewBox="0 0 6 9"><path d="M4.5 1L1.500 4.5L4.5 8" fill="none" stroke="#c8c8c8" stroke-width="1.600"/></svg>
<svg style="left:998px;top:739px" width="6" height="9" viewBox="0 0 6 9"><path d="M1.500 1L4.5 4.5L1.500 8" fill="none" stroke="#c8c8c8" stroke-width="1.600"/></svg>
<div style="left:726px;top:755px;width:22px;height:20px;background:#e1e1e1;border:1px solid #adadad;text-align:center;line-height:18px;font-size:12px;color:#000">#</div>
<div style="left:754px;top:755px;width:22px;height:20px;background:#e1e1e1;border:1px solid #adadad;text-align:center;line-height:18px;font-size:12px;color:#000">¶</div>
<div class="t" style="left:940px;top:758px;letter-spacing:-0.17px">Buchstaben :</div>
<div class="t" style="left:1016px;top:758px;font-size:12px">0</div>
<div class="s" style="left:220px;top:782px;letter-spacing:-0.18px">Anzahl der Skripte :</div>
<div class="s" style="left:328px;top:782px;">1</div>
<div style="left:956px;top:780px;width:21px;height:19px;background:#0a8a0a;border:1px solid #0a6a0a;border-top-color:#5ab85a;border-left-color:#5ab85a;text-align:center;line-height:17px;font-size:12px;color:#003800">0</div>
<div class="s" style="left:981px;top:782px;">/</div>
<div style="left:989px;top:780px;width:25px;height:18px;background:#f4f4f4;border:1px solid #fff;border-top-color:#a8a8a8;border-left-color:#a8a8a8;text-align:center;line-height:17px;font-size:12px;letter-spacing:-0.3px">67</div>
<svg style="left:1016px;top:787px" width="12" height="12" viewBox="0 0 12 12"><g fill="#a0a0a0"><rect x="9" y="9" width="2" height="2"/><rect x="6" y="9" width="2" height="2"/><rect x="3" y="9" width="2" height="2"/><rect x="9" y="6" width="2" height="2"/><rect x="6" y="6" width="2" height="2"/><rect x="9" y="3" width="2" height="2"/></g></svg>
<!-- arrowline -->
<svg style="left:150px;top:40px" width="100" height="200" viewBox="0 0 100 200"><path d="M13 8L86 186" stroke="#000" stroke-width="4.200" stroke-linecap="round" fill="none"/><path d="M80 180l3 9 6-4z" fill="#000"/></svg>
</body></html>
